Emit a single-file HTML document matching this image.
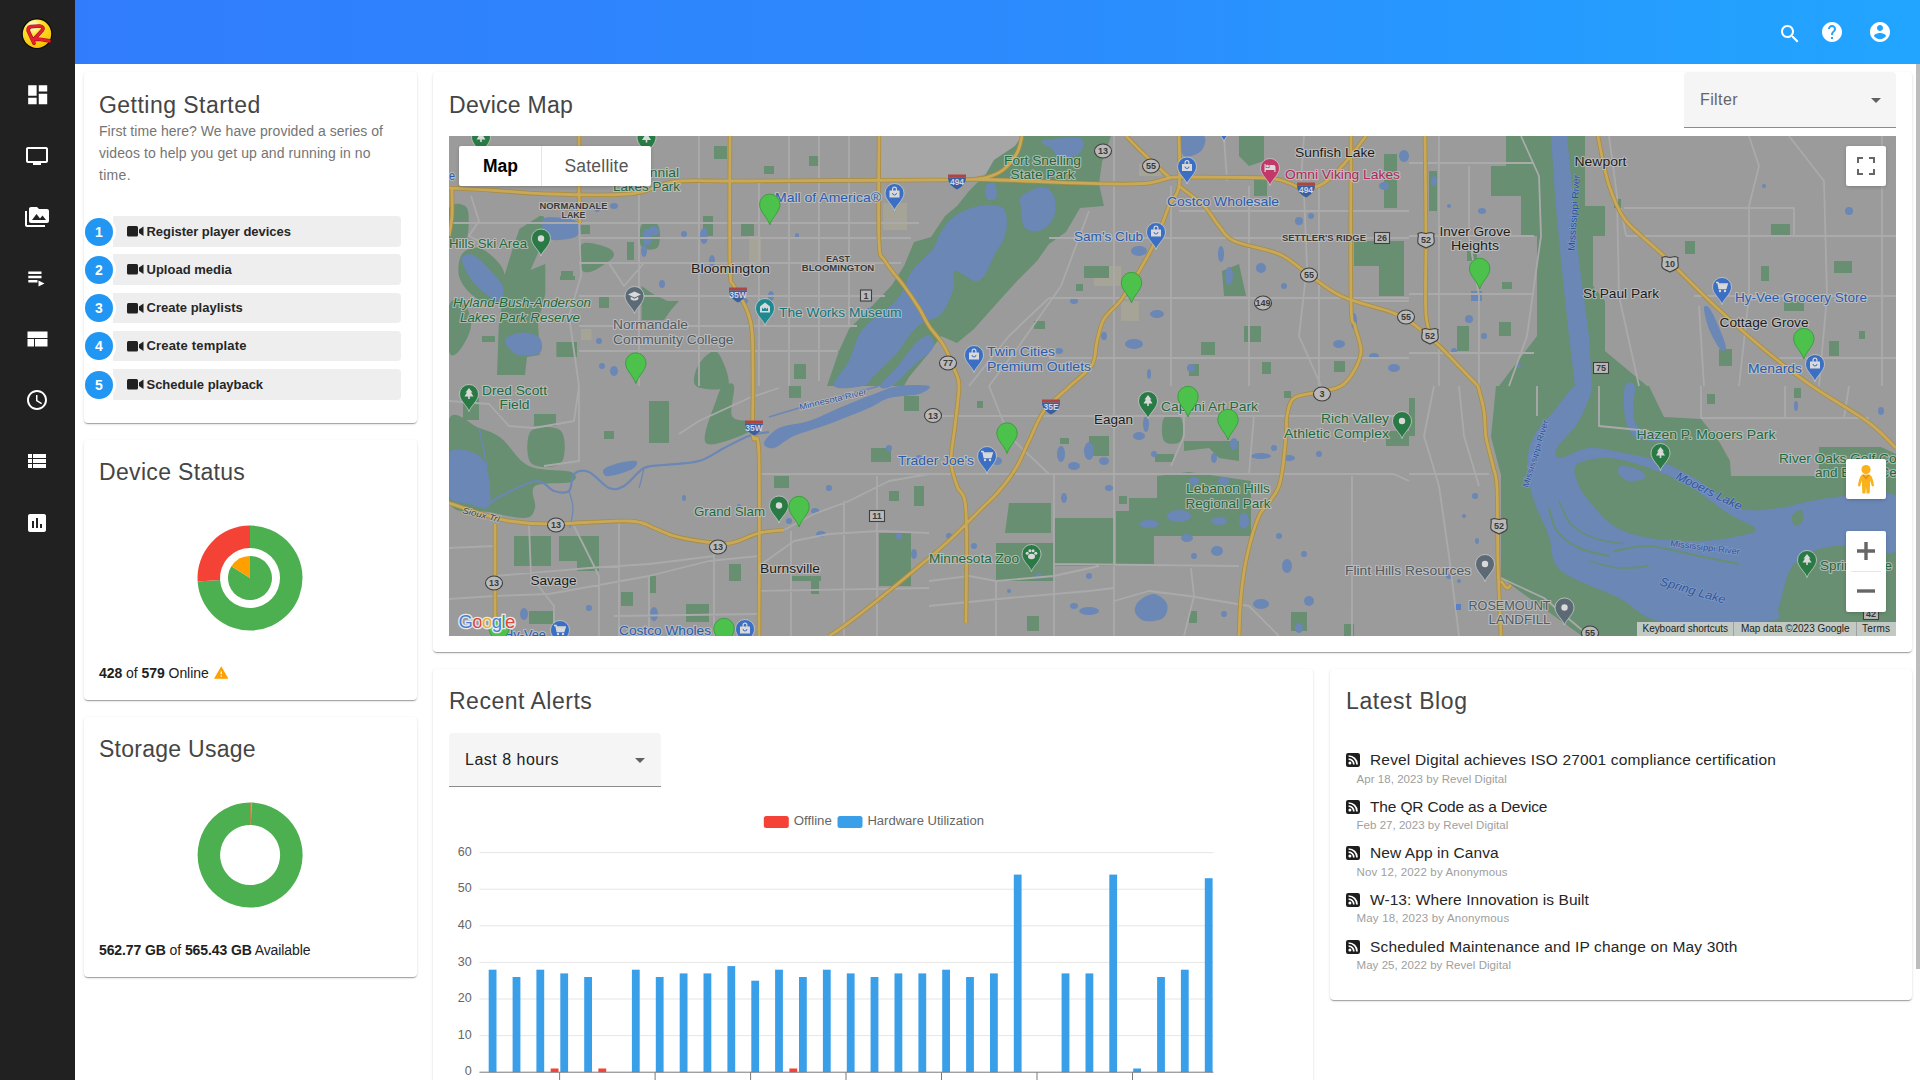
<!DOCTYPE html>
<html lang="en">
<head>
<meta charset="utf-8">
<title>Dashboard</title>
<style>
*{box-sizing:border-box;margin:0;padding:0}
html,body{width:1920px;height:1080px;overflow:hidden;background:#fff;font-family:"Liberation Sans",sans-serif;color:#212121}
.abs{position:absolute}
#side{position:absolute;left:0;top:0;width:75px;height:1080px;background:#212121}
#side svg{position:absolute;left:25px;width:24px;height:24px;fill:#fff}
#top{position:absolute;left:75px;top:0;width:1845px;height:64px;background:linear-gradient(90deg,#317cfc 0%,#2c8afd 50%,#21a5ff 100%)}
#top svg{position:absolute;fill:#fff}
.card{position:absolute;background:#fff;border-radius:4px;box-shadow:0 2px 1px -1px rgba(0,0,0,.2),0 1px 1px 0 rgba(0,0,0,.14),0 1px 3px 0 rgba(0,0,0,.12)}
.h{position:absolute;font-size:23px;font-weight:400;color:#454545;white-space:nowrap;line-height:28px}
.t{position:absolute;white-space:nowrap}
</style>
</head>
<body>
<div id="side">
  <!-- logo -->
  <svg style="left:21px;top:18px;width:32px;height:32px;overflow:visible" viewBox="0 0 32 32">
    <defs><radialGradient id="lg" cx=".36" cy=".22" r=".8"><stop offset="0" stop-color="#fffbe6"/><stop offset=".18" stop-color="#fff3a0"/><stop offset=".42" stop-color="#ffe02a"/><stop offset="1" stop-color="#f4c000"/></radialGradient></defs>
    <circle cx="16" cy="15.7" r="15.4" fill="#0c0c0c"/>
    <circle cx="16" cy="15.7" r="14.2" fill="url(#lg)"/>
    <path d="M13 25.2L7.2 12.8C6.9 10.4 7.9 8.9 10 8.6L18.8 8C21.7 8.1 22.9 10.2 21.3 12.2L13 21.3L18.6 21.3L28.2 22.9" fill="none" stroke="#a8121e" stroke-width="3.7" stroke-linecap="round" stroke-linejoin="round"/>
    <path d="M13 25.2L7.2 12.8C6.9 10.4 7.9 8.9 10 8.6L18.8 8C21.7 8.1 22.9 10.2 21.3 12.2L13 21.3L18.6 21.3L28.2 22.9" fill="none" stroke="#e6212f" stroke-width="2.5" stroke-linecap="round" stroke-linejoin="round"/>
  </svg>
  <svg style="top:81.5px;left:24.5px;width:25.4px;height:25.4px" viewBox="0 0 24 24"><path d="M3 13h8V3H3v10zm0 8h8v-6H3v6zm10 0h8V11h-8v10zm0-18v6h8V3h-8z"/></svg>
  <svg style="top:143.5px" viewBox="0 0 24 24"><path d="M21 3H3c-1.1 0-2 .9-2 2v12c0 1.1.9 2 2 2h5v2h8v-2h5c1.1 0 1.99-.9 1.99-2L23 5c0-1.1-.9-2-2-2zm0 14H3V5h18v12z"/></svg>
  <svg style="top:205px" viewBox="0 0 24 24"><path d="M2 6H0v5h.01L0 20c0 1.1.9 2 2 2h18v-2H2V6zm20-2h-8l-2-2H6c-1.1 0-1.99.9-1.99 2L4 16c0 1.1.9 2 2 2h16c1.1 0 2-.9 2-2V6c0-1.1-.9-2-2-2zM7 15l4.500-6 3.500 4.510 2.500-3.010L21 15H7z"/></svg>
  <svg style="top:267px" viewBox="0 0 24 24"><path d="M3.300 4.500h13.200v2.500H3.300zM3.300 8.800h13.200v2.500H3.300zM3.300 13h9.200v2.500H3.300zM13.500 13.500v6l6-3z"/></svg>
  <svg style="top:327px" viewBox="0 0 24 24"><path d="M2.500 4.500h20v6.500h-20zM2.500 12h6.500v7.500H2.500zM10 12h12.500v7.500H10z"/></svg>
  <svg style="top:388px" viewBox="0 0 24 24"><path d="M11.990 2C6.470 2 2 6.480 2 12s4.470 10 9.990 10C17.520 22 22 17.520 22 12S17.520 2 11.990 2zM12 20c-4.420 0-8-3.580-8-8s3.580-8 8-8 8 3.580 8 8-3.580 8-8 8zm.500-13H11v6l5.250 3.150.750-1.230-4.500-2.670z"/></svg>
  <svg style="top:449px" viewBox="0 0 24 24"><path d="M3 14h4v-4H3v4zm0 5h4v-4H3v4zM3 9h4V5H3v4zm5 5h13v-4H8v4zm0 5h13v-4H8v4zM8 5v4h13V5H8z"/></svg>
  <svg style="top:511px" viewBox="0 0 24 24"><path d="M19 3H5c-1.100 0-2 .900-2 2v14c0 1.100.900 2 2 2h14c1.100 0 2-.900 2-2V5c0-1.100-.900-2-2-2zM9 17H7v-7h2v7zm4 0h-2V7h2v10zm4 0h-2v-4h2v4z"/></svg>
</div>
<div id="top">
  <svg style="left:1703px;top:22px;width:24px;height:24px" viewBox="0 0 24 24"><path d="M15.500 14h-.790l-.280-.270C15.410 12.590 16 11.110 16 9.500 16 5.910 13.090 3 9.500 3S3 5.910 3 9.500 5.910 16 9.500 16c1.610 0 3.090-.590 4.230-1.570l.270.280v.790l5 4.990L20.490 19l-4.990-5zm-6 0C7.010 14 5 11.990 5 9.500S7.010 5 9.500 5 14 7.010 14 9.500 11.990 14 9.500 14z"/></svg>
  <svg style="left:1745px;top:20px;width:24px;height:24px" viewBox="0 0 24 24"><path d="M12 2C6.480 2 2 6.480 2 12s4.480 10 10 10 10-4.480 10-10S17.520 2 12 2zm1 17h-2v-2h2v2zm2.070-7.750l-.900.920C13.450 12.900 13 13.500 13 15h-2v-.500c0-1.100.450-2.100 1.170-2.830l1.240-1.260c.370-.360.590-.860.590-1.410 0-1.100-.900-2-2-2s-2 .900-2 2H8c0-2.210 1.790-4 4-4s4 1.790 4 4c0 .880-.360 1.680-.930 2.250z"/></svg>
  <svg style="left:1793px;top:20px;width:24px;height:24px" viewBox="0 0 24 24"><path d="M12 2C6.480 2 2 6.480 2 12s4.480 10 10 10 10-4.480 10-10S17.520 2 12 2zm0 3c1.660 0 3 1.340 3 3s-1.340 3-3 3-3-1.340-3-3 1.340-3 3-3zm0 14.200c-2.500 0-4.710-1.280-6-3.220.030-1.990 4-3.080 6-3.080 1.990 0 5.970 1.090 6 3.080-1.290 1.940-3.500 3.220-6 3.220z"/></svg>
</div>

<!-- CARDS -->
<div class="card" id="c-gs" style="left:84px;top:72px;width:333px;height:351px"></div>
<div class="card" id="c-ds" style="left:84px;top:440px;width:333px;height:260px"></div>
<div class="card" id="c-su" style="left:84px;top:717px;width:333px;height:260px"></div>
<div class="card" id="c-map" style="left:433px;top:72px;width:1479px;height:580px"></div>
<div class="card" id="c-al" style="left:433px;top:669px;width:880px;height:430px"></div>
<div class="card" id="c-bl" style="left:1330px;top:669px;width:582px;height:331px"></div>

<div class="h" id="h0" style="letter-spacing:0.47px;left:99px;top:90.5px">Getting Started</div>
<div class="h" id="h1" style="letter-spacing:0.33px;left:99px;top:457.7px">Device Status</div>
<div class="h" id="h2" style="letter-spacing:0.26px;left:99px;top:734.7px">Storage Usage</div>
<div class="h" id="h3" style="letter-spacing:0.27px;left:449px;top:90.5px">Device Map</div>
<div class="h" id="h4" style="letter-spacing:0.5px;left:449px;top:686.6px">Recent Alerts</div>
<div class="h" id="h5" style="letter-spacing:0.59px;left:1346px;top:686.6px">Latest Blog</div>

<div class="t" id="p0" style="letter-spacing:0.04px;left:99px;top:120.5px;font-size:14px;line-height:21.8px;color:#757575">First time here? We have provided a series of</div>
<div class="t" id="p1" style="letter-spacing:0.09px;left:99px;top:142.5px;font-size:14px;line-height:21.8px;color:#757575">videos to help you get up and running in no</div>
<div class="t" id="p2" style="letter-spacing:0.3px;left:99px;top:164.5px;font-size:14px;line-height:21.8px;color:#757575">time.</div>
<div class="abs" style="left:113px;top:216.00px;width:288px;height:30.5px;background:#eeeeee;border-radius:0 4px 4px 0"></div>
<div class="abs" style="left:82.5px;top:215.00px;width:33px;height:33px;border-radius:50%;background:#fff"></div>
<div class="abs" style="left:85px;top:217.50px;width:28px;height:28px;border-radius:50%;background:#2196f3;color:#fff;font-weight:700;font-size:14px;line-height:28px;text-align:center">1</div>
<svg class="abs" style="left:127px;top:226.00px;width:17px;height:11px" viewBox="0 0 17 11"><rect x="0" y="0" width="11" height="10.5" rx="1.5" fill="#212121"/><path d="M12 3.5L16.5 .5V10L12 7z" fill="#212121"/></svg>
<div class="t" id="s0" style="letter-spacing:-0.04px;left:146.5px;top:222.50px;font-size:13px;line-height:17px;font-weight:700;color:#262626">Register player devices</div>
<div class="abs" style="left:113px;top:254.25px;width:288px;height:30.5px;background:#eeeeee;border-radius:0 4px 4px 0"></div>
<div class="abs" style="left:82.5px;top:253.25px;width:33px;height:33px;border-radius:50%;background:#fff"></div>
<div class="abs" style="left:85px;top:255.75px;width:28px;height:28px;border-radius:50%;background:#2196f3;color:#fff;font-weight:700;font-size:14px;line-height:28px;text-align:center">2</div>
<svg class="abs" style="left:127px;top:264.25px;width:17px;height:11px" viewBox="0 0 17 11"><rect x="0" y="0" width="11" height="10.5" rx="1.5" fill="#212121"/><path d="M12 3.5L16.5 .5V10L12 7z" fill="#212121"/></svg>
<div class="t" id="s1" style="letter-spacing:0.01px;left:146.5px;top:260.75px;font-size:13px;line-height:17px;font-weight:700;color:#262626">Upload media</div>
<div class="abs" style="left:113px;top:292.50px;width:288px;height:30.5px;background:#eeeeee;border-radius:0 4px 4px 0"></div>
<div class="abs" style="left:82.5px;top:291.50px;width:33px;height:33px;border-radius:50%;background:#fff"></div>
<div class="abs" style="left:85px;top:294.00px;width:28px;height:28px;border-radius:50%;background:#2196f3;color:#fff;font-weight:700;font-size:14px;line-height:28px;text-align:center">3</div>
<svg class="abs" style="left:127px;top:302.50px;width:17px;height:11px" viewBox="0 0 17 11"><rect x="0" y="0" width="11" height="10.5" rx="1.5" fill="#212121"/><path d="M12 3.5L16.5 .5V10L12 7z" fill="#212121"/></svg>
<div class="t" id="s2" style="letter-spacing:0.01px;left:146.5px;top:299.00px;font-size:13px;line-height:17px;font-weight:700;color:#262626">Create playlists</div>
<div class="abs" style="left:113px;top:330.75px;width:288px;height:30.5px;background:#eeeeee;border-radius:0 4px 4px 0"></div>
<div class="abs" style="left:82.5px;top:329.75px;width:33px;height:33px;border-radius:50%;background:#fff"></div>
<div class="abs" style="left:85px;top:332.25px;width:28px;height:28px;border-radius:50%;background:#2196f3;color:#fff;font-weight:700;font-size:14px;line-height:28px;text-align:center">4</div>
<svg class="abs" style="left:127px;top:340.75px;width:17px;height:11px" viewBox="0 0 17 11"><rect x="0" y="0" width="11" height="10.5" rx="1.5" fill="#212121"/><path d="M12 3.5L16.5 .5V10L12 7z" fill="#212121"/></svg>
<div class="t" id="s3" style="letter-spacing:0.17px;left:146.5px;top:337.25px;font-size:13px;line-height:17px;font-weight:700;color:#262626">Create template</div>
<div class="abs" style="left:113px;top:369.00px;width:288px;height:30.5px;background:#eeeeee;border-radius:0 4px 4px 0"></div>
<div class="abs" style="left:82.5px;top:368.00px;width:33px;height:33px;border-radius:50%;background:#fff"></div>
<div class="abs" style="left:85px;top:370.50px;width:28px;height:28px;border-radius:50%;background:#2196f3;color:#fff;font-weight:700;font-size:14px;line-height:28px;text-align:center">5</div>
<svg class="abs" style="left:127px;top:379.00px;width:17px;height:11px" viewBox="0 0 17 11"><rect x="0" y="0" width="11" height="10.5" rx="1.5" fill="#212121"/><path d="M12 3.5L16.5 .5V10L12 7z" fill="#212121"/></svg>
<div class="t" id="s4" style="letter-spacing:-0.03px;left:146.5px;top:375.50px;font-size:13px;line-height:17px;font-weight:700;color:#262626">Schedule playback</div>
<svg class="abs" style="left:190px;top:518px;width:120px;height:120px" viewBox="0 0 120 120"><path d="M60.00 7.50A52.5 52.5 0 1 1 7.62 63.56L30.07 62.03A30 30 0 1 0 60.00 30.00Z" fill="#4caf50"/><path d="M7.62 63.56A52.5 52.5 0 0 1 60.00 7.50L60.00 30.00A30 30 0 0 0 30.07 62.03Z" fill="#f44336"/><path d="M60 60L60.00 38.00A22 22 0 1 1 41.34 48.34Z" fill="#4caf50"/><path d="M60 60L41.34 48.34A22 22 0 0 1 60.00 38.00Z" fill="#ffa000"/></svg>
<div class="t" id="on" style="letter-spacing:-0.05px;left:99px;top:664px;font-size:14px;line-height:18px;color:#212121"><b>428</b> of <b>579</b> Online</div>
<svg class="abs" style="left:213.5px;top:666px;width:14.5px;height:13px" viewBox="0 0 22 19"><path d="M0 19h22L11 0 0 19zm12-3h-2v-2h2v2zm0-4h-2V8h2v4z" fill="#ffa000"/></svg>
<svg class="abs" style="left:190px;top:795px;width:120px;height:120px" viewBox="0 0 120 120"><path d="M61.56 7.52A52.5 52.5 0 1 1 60.00 7.50L60.00 30.00A30 30 0 1 0 60.89 30.01Z" fill="#4caf50"/><path d="M60.00 7.50A52.5 52.5 0 0 1 61.56 7.52L60.89 30.01A30 30 0 0 0 60.00 30.00Z" fill="#b5894a"/></svg>
<div class="t" id="av" style="letter-spacing:-0.1px;left:99px;top:941px;font-size:14px;line-height:18px;color:#212121"><b>562.77 GB</b> of <b>565.43 GB</b> Available</div>

<svg class="abs" style="left:449px;top:136px;width:1447px;height:500px" viewBox="0 0 1447 500" font-family="Liberation Sans, sans-serif"><rect x="0" y="0" width="1447" height="500" fill="#9b9b9c"/><path d="M432 0L573 0L566 10L545 24L537 38L520 43L432 43Z" fill="#a6a6a7"/><rect x="132" y="193" width="10.6" height="11" fill="#a6a397"/><rect x="434" y="67" width="24" height="27" fill="#a6a397"/><rect x="645" y="130" width="27" height="20" fill="#a6a397"/><rect x="672" y="165" width="18" height="20" fill="#a6a397"/><rect x="300" y="100" width="12" height="30" fill="#a6a397"/><rect x="690" y="28" width="22" height="12" fill="#a6a397"/><path d="M90.7 80L70.4 93L63 115L55.6 139L55.6 158L50 184L48 239L76 239L78 221L90.7 219L89 187L96.3 158L96.3 128L81.5 134L89 117L100 98.4L94.4 80Z" fill="#688f71"/><path d="M0 72C3 65.7 15 67 18 72C21 77 19.7 96.7 18 102C16.3 107.3 11 102.7 8 104C5 105.3 1.3 115.3 0 110C-1.3 104.7 -3 78.3 0 72Z" fill="#688f71"/><path d="M13 118C16.3 113.3 24.2 110.8 30 112C35.8 113.2 43.7 120.3 48 125C52.3 129.7 54.8 133.2 56 140C57.2 146.8 57.7 161.3 55 166C52.3 170.7 45.5 169.3 40 168C34.5 166.7 27 162.7 22 158C17 153.3 11.5 146.7 10 140C8.5 133.3 9.7 122.7 13 118Z" fill="#688f71"/><path d="M0 170C2.3 161.7 10.3 161.7 14 165C17.7 168.3 22.7 181.7 22 190C21.3 198.3 13.7 210.8 10 215C6.3 219.2 1.7 222.5 0 215C-1.7 207.5 -2.3 178.3 0 170Z" fill="#688f71"/><path d="M133 108C137.2 104.5 151.7 109.2 157 111C162.3 112.8 165.2 116.2 165 119C164.8 121.8 160 125.2 156 128C152 130.8 145 135.3 141 136C137 136.7 133.3 136.7 132 132C130.7 127.3 128.8 111.5 133 108Z" fill="#688f71"/><path d="M132 89L141 89L141 98L132 98Z" fill="#688f71"/><path d="M192.6 89C195.3 85.3 206.3 85.3 209 89C211.7 92.7 211.7 107.3 209 111C206.3 114.7 195.3 114.7 192.6 111C189.9 107.3 189.9 92.7 192.6 89Z" fill="#688f71"/><path d="M178 106L185 106L185 124L178 124Z" fill="#688f71"/><path d="M192.6 150L204 158L218.5 165L230 165L222 174L215 184L192.6 184Z" fill="#688f71"/><path d="M107.4 206L128 206L128 221L107.4 221Z" fill="#688f71"/><path d="M33 200L46 200L46 206L33 206Z" fill="#688f71"/><path d="M111 140L126 140L126 144L111 144Z" fill="#688f71"/><path d="M250 228C253.5 222.3 263.2 212.3 268 216C272.8 219.7 282.5 244.3 279 250C275.5 255.7 251.8 253.7 247 250C242.2 246.3 246.5 233.7 250 228Z" fill="#688f71"/><path d="M265 10L278 10L278 23L265 23Z" fill="#688f71"/><path d="M254 80L264 80L264 100L254 100Z" fill="#688f71"/><path d="M292 88L305 88L305 100L292 100Z" fill="#688f71"/><path d="M345 228L357 228L357 243L345 243Z" fill="#688f71"/><path d="M360 20L370 20L370 30L360 30Z" fill="#688f71"/><path d="M112 135L124 135L124 142L112 142Z" fill="#688f71"/><path d="M315 30L325 30L325 38L315 38Z" fill="#688f71"/><path d="M150 160L160 160L160 172L150 172Z" fill="#688f71"/><path d="M18 20L40 20L40 40L18 40Z" fill="#688f71"/><path d="M378 250L390 215L400 193L424 169L443 149L455 130L465 106L482 101L496 80L508 70L520 55L537 38L545 24L566 10L573 0L662 0L653 26L650 48L655 70L631 72L617 96L600 108L588 125L569 144L549 166L525 193L508 207L492 200L480 217L460 241L455 250Z" fill="#688f71"/><path d="M773 135L790 128L797 160L775 160Z" fill="#688f71"/><path d="M905 105L955 105L955 160L930 160L930 130L905 130Z" fill="#688f71"/><path d="M790 0L815 0L815 25L800 30L790 20Z" fill="#688f71"/><path d="M935 18L948 18L948 72L935 72Z" fill="#688f71"/><path d="M805 40L818 40L818 60L805 60Z" fill="#688f71"/><path d="M795 190L812 190L812 206L795 206Z" fill="#688f71"/><path d="M635 130L660 130L660 142L635 142Z" fill="#688f71"/><path d="M627 148L634 148L634 155L627 155Z" fill="#688f71"/><path d="M585 185L596 185L596 193L585 193Z" fill="#688f71"/><path d="M752 206L766 206L766 219L752 219Z" fill="#688f71"/><path d="M813 226L822 226L822 238L813 238Z" fill="#688f71"/><path d="M885 225L896 225L896 236L885 236Z" fill="#688f71"/><path d="M740 228L750 228L750 240L740 240Z" fill="#688f71"/><path d="M1057 0L1136 0L1136 70L1156 70L1156 100L1144 100L1144 150L1156 165L1156 215L1198 250L1050 250L1088 200L1088 100L1072 100L1072 60L1042 60L1042 30L1057 30Z" fill="#688f71"/><path d="M1236 105L1246 105L1246 118L1236 118Z" fill="#688f71"/><path d="M1322 88L1341 88L1341 100L1322 100Z" fill="#688f71"/><path d="M1385 125L1403 125L1403 137L1385 137Z" fill="#688f71"/><path d="M1270 213L1283 213L1283 230L1270 230Z" fill="#688f71"/><path d="M1050 186L1062 186L1062 200L1050 200Z" fill="#688f71"/><path d="M980 35L988 35L988 75L980 75Z" fill="#688f71"/><path d="M1018 115L1028 115L1028 125L1018 125Z" fill="#688f71"/><path d="M1312 130L1320 130L1320 145L1312 145Z" fill="#688f71"/><path d="M1335 165L1355 165L1355 175L1335 175Z" fill="#688f71"/><path d="M1380 205L1390 205L1390 220L1380 220Z" fill="#688f71"/><path d="M1165 63L1172 63L1172 72L1165 72Z" fill="#688f71"/><path d="M1008 190L1020 190L1020 215L1008 215Z" fill="#688f71"/><path d="M1053 146L1063 146L1063 153L1053 153Z" fill="#688f71"/><path d="M1410 195L1416 195L1416 203L1410 203Z" fill="#688f71"/><path d="M0 283C5 270.7 21.3 288.8 30 292C38.7 295.2 43.7 295.7 52 302C60.3 308.3 68.3 324.3 80 330C91.7 335.7 115 333.3 122 336C129 338.7 128 343.7 122 346C116 348.3 92 345.7 86 350C80 354.3 87.7 366.7 86 372C84.3 377.3 83.7 381.3 76 382C68.3 382.7 52.7 378.7 40 376C27.3 373.3 6.7 381.5 0 366C-6.7 350.5 -5 295.3 0 283Z" fill="#688f71"/><path d="M82 295C87 289.7 107 289.7 112 295C117 300.3 117 321.7 112 327C107 332.3 87 332.3 82 327C77 321.7 77 300.3 82 295Z" fill="#688f71"/><path d="M200 265L220 265L220 307L200 307Z" fill="#688f71"/><path d="M257 307C251.7 301.3 265 271.5 268 262C271 252.5 272.2 252 275 250C277.8 248 283.7 245 285 250C286.3 255 280.5 274 283 280C285.5 286 297.2 283.3 300 286C302.8 288.7 307.2 292.5 300 296C292.8 299.5 262.3 312.7 257 307Z" fill="#688f71"/><path d="M65 400L102 400L102 430L65 430Z" fill="#688f71"/><path d="M110 400L150 400L150 435L128 435L128 425L110 425Z" fill="#688f71"/><path d="M430 397L462 397L462 450L430 450Z" fill="#688f71"/><path d="M14 262L30 262L30 284L14 284Z" fill="#688f71"/><path d="M85 278L107 278L107 290L85 290Z" fill="#688f71"/><path d="M155 295L165 295L165 303L155 303Z" fill="#688f71"/><path d="M237 468L260 468L260 486L237 486Z" fill="#688f71"/><path d="M172 456L184 456L184 470L172 470Z" fill="#688f71"/><path d="M325 340L340 340L340 352L325 352Z" fill="#688f71"/><path d="M343 440L372 440L372 445L343 445Z" fill="#688f71"/><path d="M362 445L370 445L370 458L362 458Z" fill="#688f71"/><path d="M422 312L442 312L442 326L422 326Z" fill="#688f71"/><path d="M340 250L352 250L352 262L340 262Z" fill="#688f71"/><path d="M80 475L104 475L104 488L80 488Z" fill="#688f71"/><path d="M280 428L292 428L292 445L280 445Z" fill="#688f71"/><path d="M200 440L207 440L207 457L200 457Z" fill="#688f71"/><path d="M455 260L470 260L470 275L455 275Z" fill="#688f71"/><path d="M440 355L450 355L450 365L440 365Z" fill="#688f71"/><path d="M465 350L475 350L475 370L465 370Z" fill="#688f71"/><path d="M667 375L680 375L680 362L708 362L708 340L740 336L802 345L802 400L667 400Z" fill="#688f71"/><path d="M605 382L665 382L665 430L605 430Z" fill="#688f71"/><path d="M560 367L602 367L602 397L556 397Z" fill="#688f71"/><path d="M547 407L605 407L605 445L547 445Z" fill="#688f71"/><path d="M667 400L705 400L705 429L667 429Z" fill="#688f71"/><path d="M715 282C717.8 278.2 729.2 278.2 732 282C734.8 285.8 734.8 301.2 732 305C729.2 308.8 717.8 308.8 715 305C712.2 301.2 712.2 285.8 715 282Z" fill="#688f71"/><path d="M735 305L790 305L790 325L770 322L760 312L735 315Z" fill="#688f71"/><path d="M937 295L960 295L960 310L937 310Z" fill="#688f71"/><path d="M640 300L660 300L660 320L640 320Z" fill="#688f71"/><path d="M706 318L725 318L725 326L706 326Z" fill="#688f71"/><path d="M895 488L905 488L905 500L895 500Z" fill="#688f71"/><path d="M740 475L748 475L748 487L740 487Z" fill="#688f71"/><path d="M842 476L858 476L858 495L842 495Z" fill="#688f71"/><path d="M578 480L590 480L590 495L578 495Z" fill="#688f71"/><path d="M528 265L534 265L534 272L528 272Z" fill="#688f71"/><path d="M611 302L620 302L620 308L611 308Z" fill="#688f71"/><path d="M670 360L678 360L678 368L670 368Z" fill="#688f71"/><path d="M835 255L842 255L842 262L835 262Z" fill="#688f71"/><path d="M1047 250L1200 250L1215 281L1252 283L1271 307L1281 325L1282 340L1370 340L1370 311L1432 311L1447 318L1447 500L1133 500L1062 449L1052 441L1052 339L1042 301Z" fill="#688f71"/><path d="M960 262L966 262L966 300L960 300Z" fill="#688f71"/><path d="M1258 258L1266 258L1266 268L1258 268Z" fill="#688f71"/><path d="M1345 252L1352 252L1352 262L1345 262Z" fill="#688f71"/><path d="M13 122.5C13.6 118.8 19.7 117.4 24 119C28.3 120.6 34 126.8 39 132C44 137.2 51.5 144.5 53.7 150C55.9 155.5 54.8 163.7 52 165C49.2 166.3 42.3 162 37 158C31.7 154 24.4 146.9 20.4 141C16.4 135.1 12.4 126.2 13 122.5Z" fill="#6a87b6"/><path d="M57.4 202C59.9 199.5 68.5 196.6 74 196.6C79.5 196.6 87.9 198.6 90.7 202C93.5 205.4 94.1 214.2 90.7 217C87.3 219.8 75.6 219.9 70.4 219C65.2 218.1 61.5 214.2 59.3 211.4C57.1 208.6 54.9 204.5 57.4 202Z" fill="#6a87b6"/><path d="M95.4 82C100.8 80.2 122.6 82.5 128 85.5C133.4 88.5 132 96.9 128 100C124 103.1 109.4 104.6 104 104C98.6 103.4 96.8 100.3 95.4 96.6C94 92.9 90 83.8 95.4 82Z" fill="#6a87b6"/><path d="M194.5 95C195.5 92.7 199.8 92 201 94C202.2 96 203 104.7 202 107C201 109.3 196.2 110 195 108C193.8 106 193.5 97.3 194.5 95Z" fill="#6a87b6"/><path d="M732 0C735.3 -3.3 751.7 -2.5 755 0C758.3 2.5 755.3 11.7 752 15C748.7 18.3 738.3 22.5 735 20C731.7 17.5 728.7 3.3 732 0Z" fill="#6a87b6"/><path d="M385 250C382.7 245.8 395.2 234.5 400 225C404.8 215.5 406 203.2 414 193C422 182.8 439.8 173.7 448 164C456.2 154.3 457 143.5 463 135C469 126.5 479.2 119.5 484 113C488.8 106.5 488.3 101.5 492 96C495.7 90.5 499.7 84.3 506 80C512.3 75.7 522 71.3 530 70C538 68.7 549.5 67.7 554 72C558.5 76.3 558.5 88 557 96C555.5 104 548.7 112.7 545 120C541.3 127.3 538.3 135.8 535 140C531.7 144.2 529.8 145.8 525 145C520.2 144.2 509.5 133.5 506 135C502.5 136.5 506.3 146.8 504 154C501.7 161.2 497.3 172.3 492 178C486.7 183.7 477.3 184.3 472 188C466.7 191.7 464 195.2 460 200C456 204.8 454 210.2 448 217C442 223.8 429.7 235.5 424 241C418.3 246.5 420.5 248.5 414 250C407.5 251.5 387.3 254.2 385 250Z" fill="#6a87b6"/><path d="M573 60C576.5 56.5 587.7 51 593 51C598.3 51 603 55.2 605 60C607 64.8 607 74.3 605 80C603 85.7 597.8 92 593 94C588.2 96 579.5 95.7 576 92C572.5 88.3 572.5 77.3 572 72C571.5 66.7 569.5 63.5 573 60Z" fill="#6a87b6"/><path d="M593 5C597.8 3.3 624.7 0 631 2C637.3 4 634.2 13.7 631 17C627.8 20.3 616.8 22.8 612 22C607.2 21.2 605.2 14.8 602 12C598.8 9.2 588.2 6.7 593 5Z" fill="#6a87b6"/><path d="M537 50C538.3 47.5 544.3 46 546 48C547.7 50 548.3 59.5 547 62C545.7 64.5 539.7 65 538 63C536.3 61 535.7 52.5 537 50Z" fill="#6a87b6"/><path d="M480 200C482.8 200.8 486.8 206.8 484 212C481.2 217.2 469.8 224.7 463 231C456.2 237.3 448.3 246.8 443 250C437.7 253.2 430.2 253.2 431 250C431.8 246.8 442 238.2 448 231C454 223.8 461.7 212.2 467 207C472.3 201.8 477.2 199.2 480 200Z" fill="#6a87b6"/><path d="M1102 0L1118 0L1124 60L1130 125L1140 200L1143 250L1126 250L1120 200L1112 125L1106 60Z" fill="#6a87b6"/><path d="M0 317C4.2 309.8 18.7 314.5 25 317C31.3 319.5 35.5 323.2 38 332C40.5 340.8 43 364 40 370C37 376 26.7 369.7 20 368C13.3 366.3 3.3 368.5 0 360C-3.3 351.5 -4.2 324.2 0 317Z" fill="#6a87b6"/><path d="M315 307C315.8 303.7 322.5 295.7 330 292C337.5 288.3 350 288.3 360 285C370 281.7 379.2 276.5 390 272C400.8 267.5 415 261.7 425 258C435 254.3 440.8 251.3 450 250C459.2 248.7 476.7 248.7 480 250C483.3 251.3 476.7 256 470 258C463.3 260 448.3 259.7 440 262C431.7 264.3 430 267.7 420 272C410 276.3 392.5 283.3 380 288C367.5 292.7 354.2 296 345 300C335.8 304 330 310.8 325 312C320 313.2 314.2 310.3 315 307Z" fill="#6a87b6"/><path d="M155 333C157.2 330.8 164.7 328.3 170 327C175.3 325.7 184.5 324.2 187 325C189.5 325.8 187.8 329.8 185 332C182.2 334.2 174.7 336.7 170 338C165.3 339.3 159.5 340.8 157 340C154.5 339.2 152.8 335.2 155 333Z" fill="#6a87b6"/><path d="M1126 250C1132.3 245.8 1142.3 244.2 1143 250C1143.7 255.8 1135.8 274.7 1130 285C1124.2 295.3 1111 305.8 1108 312C1105 318.2 1106.7 322 1112 322C1117.3 322 1128.7 312.7 1140 312C1151.3 311.3 1167.5 315.5 1180 318C1192.5 320.5 1203.3 322.5 1215 327C1226.7 331.5 1237.5 337.5 1250 345C1262.5 352.5 1276.7 367.5 1290 372C1303.3 376.5 1315 373.7 1330 372C1345 370.3 1360.5 364 1380 362C1399.5 360 1435.8 351.2 1447 360C1458.2 368.8 1457.3 406.7 1447 415C1436.7 423.3 1402 407.8 1385 410C1368 412.2 1354.2 418 1345 428C1335.8 438 1334.2 460.5 1330 470C1325.8 479.5 1339.2 482.3 1320 485C1300.8 487.7 1240 489.8 1215 486C1190 482.2 1185.8 469.7 1170 462C1154.2 454.3 1130.8 446.2 1120 440C1109.2 433.8 1108.3 431.7 1105 425C1101.7 418.3 1103.3 410 1100 400C1096.7 390 1088.7 376.7 1085 365C1081.3 353.3 1078 340.8 1078 330C1078 319.2 1080.5 309.2 1085 300C1089.5 290.8 1098.2 283.3 1105 275C1111.8 266.7 1119.7 254.2 1126 250Z" fill="#6a87b6"/><path d="M1176 250C1177.7 245 1184.7 245.8 1186 250C1187.3 254.2 1183.3 268 1184 275C1184.7 282 1184.8 287.8 1190 292C1195.2 296.2 1211.3 297.7 1215 300C1218.7 302.3 1217 306 1212 306C1207 306 1191 304.3 1185 300C1179 295.7 1177.5 288.3 1176 280C1174.5 271.7 1174.3 255 1176 250Z" fill="#6a87b6"/><path d="M690 465C693.2 462 700.3 457.5 705 458C709.7 458.5 716.5 464 718 468C719.5 472 717.7 479.2 714 482C710.3 484.8 700.7 486 696 485C691.3 484 687 479.3 686 476C685 472.7 686.8 468 690 465Z" fill="#6a87b6"/><path d="M1255 172C1255.2 168.7 1258.3 169.3 1261 173C1263.7 176.7 1268.3 187.5 1271 194C1273.7 200.5 1277 208.8 1277 212C1277 215.2 1273.8 216.2 1271 213C1268.2 209.8 1262.7 199.8 1260 193C1257.3 186.2 1254.8 175.3 1255 172Z" fill="#6a87b6"/><path d="M1022 155L1033 155L1033 165L1022 165Z" fill="#6a87b6"/><path d="M40 368C42 366.7 44.2 363.8 52 360C59.8 356.2 78.2 345.8 87 345C95.8 344.2 99.5 353.3 105 355C110.5 356.7 116.7 357.8 120 355C123.3 352.2 121.7 341.2 125 338C128.3 334.8 134.2 333.7 140 336C145.8 338.3 154.2 349.7 160 352C165.8 354.3 169.2 353.3 175 350C180.8 346.7 188.3 335.5 195 332C201.7 328.5 205.8 330.2 215 329C224.2 327.8 240 327.8 250 325C260 322.2 266.7 316.2 275 312C283.3 307.8 292.5 302.7 300 300C307.5 297.3 316.7 296.7 320 296" fill="none" stroke="#6a87b6" stroke-width="2.2"/><path d="M320 281C325 279.5 339.2 275.2 350 272C360.8 268.8 374.7 264.8 385 262C395.3 259.2 404.5 257 412 255C419.5 253 427 250.8 430 250" fill="none" stroke="#6a87b6" stroke-width="1.5"/><path d="M30 292C30.7 295 32.7 303.3 34 310C35.3 316.7 37.3 328.3 38 332" fill="none" stroke="#6a87b6" stroke-width="1.5"/><path d="M120 355C120.7 357.8 123.8 365.8 124 372C124.2 378.2 121.5 388.7 121 392" fill="none" stroke="#6a87b6" stroke-width="1.2"/><path d="M195 332C194.5 334.2 192.8 341.7 192 345C191.2 348.3 190.3 350.8 190 352" fill="none" stroke="#6a87b6" stroke-width="1.2"/><path d="M1128 328C1133.3 324.2 1148 321.3 1160 322C1172 322.7 1186.7 327.3 1200 332C1213.3 336.7 1226.7 342.3 1240 350C1253.3 357.7 1269 371 1280 378C1291 385 1303.5 388.5 1306 392C1308.5 395.5 1304.3 396.8 1295 399C1285.7 401.2 1265.8 404.5 1250 405C1234.2 405.5 1214.2 404.5 1200 402C1185.8 399.5 1175 396.2 1165 390C1155 383.8 1146.2 372.5 1140 365C1133.8 357.5 1130 351.2 1128 345C1126 338.8 1122.7 331.8 1128 328Z" fill="#688f71"/><path d="M1172 330C1175.3 329.3 1186 332 1190 334C1194 336 1197.7 340.2 1196 342C1194.3 343.8 1184.3 345.7 1180 345C1175.7 344.3 1171.3 340.5 1170 338C1168.7 335.5 1168.7 330.7 1172 330Z" fill="#6a87b6"/><path d="M1100 372C1101.3 375.8 1103 388.3 1108 395C1113 401.7 1121.3 407.8 1130 412C1138.7 416.2 1155 418.7 1160 420" fill="none" stroke="#688f71" stroke-width="2"/><path d="M1110 365C1112 368.8 1116.2 381.8 1122 388C1127.8 394.2 1136.2 398.7 1145 402C1153.8 405.3 1170 407 1175 408" fill="none" stroke="#688f71" stroke-width="1.6"/><path d="M1165 415C1170.8 414.2 1187.5 409.5 1200 410C1212.5 410.5 1225 415 1240 418C1255 421 1281.7 426.3 1290 428" fill="none" stroke="#688f71" stroke-width="2"/><path d="M1140 425C1145 426.2 1160 431.2 1170 432C1180 432.8 1195 430.3 1200 430" fill="none" stroke="#688f71" stroke-width="1.6"/><path d="M1343 380C1344 377.3 1350.2 373.3 1352 374C1353.8 374.7 1355 381.3 1354 384C1353 386.7 1347.8 390.7 1346 390C1344.2 389.3 1342 382.7 1343 380Z" fill="#688f71"/><ellipse cx="255" cy="100" rx="4" ry="8" fill="#6a87b6"/><ellipse cx="263" cy="125" rx="3" ry="6" fill="#6a87b6"/><ellipse cx="205" cy="95" rx="5" ry="5" fill="#6a87b6"/><ellipse cx="195" cy="115" rx="3" ry="6" fill="#6a87b6"/><ellipse cx="148" cy="72" rx="3" ry="4" fill="#6a87b6"/><ellipse cx="165" cy="70" rx="4" ry="3" fill="#6a87b6"/><ellipse cx="235" cy="98" rx="3" ry="3" fill="#6a87b6"/><ellipse cx="213" cy="148" rx="3" ry="4" fill="#6a87b6"/><ellipse cx="295" cy="165" rx="4" ry="3" fill="#6a87b6"/><ellipse cx="322" cy="160" rx="3" ry="5" fill="#6a87b6"/><ellipse cx="150" cy="205" rx="3" ry="3" fill="#6a87b6"/><ellipse cx="165" cy="235" rx="4" ry="5" fill="#6a87b6"/><ellipse cx="153" cy="230" rx="3" ry="3" fill="#6a87b6"/><ellipse cx="420" cy="175" rx="3" ry="3" fill="#6a87b6"/><ellipse cx="348" cy="100" rx="2" ry="3" fill="#6a87b6"/><ellipse cx="690" cy="115" rx="8" ry="5" fill="#6a87b6"/><ellipse cx="708" cy="178" rx="7" ry="4" fill="#6a87b6"/><ellipse cx="685" cy="208" rx="9" ry="5" fill="#6a87b6"/><ellipse cx="772" cy="118" rx="3" ry="8" fill="#6a87b6"/><ellipse cx="780" cy="140" rx="4" ry="9" fill="#6a87b6"/><ellipse cx="812" cy="132" rx="5" ry="5" fill="#6a87b6"/><ellipse cx="850" cy="85" rx="4" ry="4" fill="#6a87b6"/><ellipse cx="862" cy="80" rx="3" ry="3" fill="#6a87b6"/><ellipse cx="625" cy="165" rx="4" ry="3" fill="#6a87b6"/><ellipse cx="610" cy="215" rx="4" ry="3" fill="#6a87b6"/><ellipse cx="655" cy="200" rx="3" ry="4" fill="#6a87b6"/><ellipse cx="742" cy="232" rx="4" ry="4" fill="#6a87b6"/><ellipse cx="700" cy="238" rx="2" ry="5" fill="#6a87b6"/><ellipse cx="835" cy="150" rx="3" ry="3" fill="#6a87b6"/><ellipse cx="890" cy="208" rx="6" ry="4" fill="#6a87b6"/><ellipse cx="925" cy="220" rx="5" ry="3" fill="#6a87b6"/><ellipse cx="945" cy="232" rx="6" ry="4" fill="#6a87b6"/><ellipse cx="905" cy="185" rx="3" ry="8" fill="#6a87b6"/><ellipse cx="935" cy="50" rx="5" ry="4" fill="#6a87b6"/><ellipse cx="955" cy="20" rx="5" ry="6" fill="#6a87b6"/><ellipse cx="1033" cy="75" rx="4" ry="3" fill="#6a87b6"/><ellipse cx="985" cy="45" rx="3" ry="5" fill="#6a87b6"/><ellipse cx="1000" cy="70" rx="2" ry="2" fill="#6a87b6"/><ellipse cx="1020" cy="183" rx="4" ry="4" fill="#6a87b6"/><ellipse cx="1035" cy="200" rx="3" ry="3" fill="#6a87b6"/><ellipse cx="1005" cy="215" rx="3" ry="3" fill="#6a87b6"/><ellipse cx="1070" cy="230" rx="2" ry="2" fill="#6a87b6"/><ellipse cx="1400" cy="75" rx="4" ry="4" fill="#6a87b6"/><ellipse cx="1315" cy="50" rx="2" ry="2" fill="#6a87b6"/><ellipse cx="548" cy="325" rx="5" ry="4" fill="#6a87b6"/><ellipse cx="612" cy="318" rx="4" ry="8" fill="#6a87b6"/><ellipse cx="625" cy="330" rx="6" ry="4" fill="#6a87b6"/><ellipse cx="640" cy="315" rx="5" ry="9" fill="#6a87b6"/><ellipse cx="655" cy="325" rx="5" ry="4" fill="#6a87b6"/><ellipse cx="690" cy="300" rx="6" ry="4" fill="#6a87b6"/><ellipse cx="697" cy="288" rx="3" ry="8" fill="#6a87b6"/><ellipse cx="705" cy="318" rx="3" ry="3" fill="#6a87b6"/><ellipse cx="765" cy="322" rx="3" ry="5" fill="#6a87b6"/><ellipse cx="785" cy="308" rx="4" ry="6" fill="#6a87b6"/><ellipse cx="812" cy="320" rx="10" ry="3" fill="#6a87b6"/><ellipse cx="840" cy="322" rx="6" ry="3" fill="#6a87b6"/><ellipse cx="825" cy="312" rx="3" ry="3" fill="#6a87b6"/><ellipse cx="870" cy="318" rx="3" ry="3" fill="#6a87b6"/><ellipse cx="745" cy="345" rx="5" ry="4" fill="#6a87b6"/><ellipse cx="775" cy="345" rx="6" ry="4" fill="#6a87b6"/><ellipse cx="730" cy="380" rx="12" ry="6" fill="#6a87b6"/><ellipse cx="700" cy="388" rx="10" ry="4" fill="#6a87b6"/><ellipse cx="770" cy="385" rx="8" ry="4" fill="#6a87b6"/><ellipse cx="795" cy="385" rx="5" ry="8" fill="#6a87b6"/><ellipse cx="738" cy="402" rx="6" ry="4" fill="#6a87b6"/><ellipse cx="768" cy="415" rx="6" ry="5" fill="#6a87b6"/><ellipse cx="745" cy="420" rx="3" ry="3" fill="#6a87b6"/><ellipse cx="830" cy="400" rx="3" ry="3" fill="#6a87b6"/><ellipse cx="838" cy="430" rx="5" ry="7" fill="#6a87b6"/><ellipse cx="860" cy="465" rx="5" ry="5" fill="#6a87b6"/><ellipse cx="812" cy="468" rx="8" ry="5" fill="#6a87b6"/><ellipse cx="855" cy="418" rx="3" ry="3" fill="#6a87b6"/><ellipse cx="640" cy="475" rx="10" ry="4" fill="#6a87b6"/><ellipse cx="625" cy="470" rx="4" ry="3" fill="#6a87b6"/><ellipse cx="775" cy="478" rx="3" ry="3" fill="#6a87b6"/><ellipse cx="850" cy="492" rx="4" ry="5" fill="#6a87b6"/><ellipse cx="615" cy="362" rx="3" ry="5" fill="#6a87b6"/><ellipse cx="660" cy="352" rx="4" ry="3" fill="#6a87b6"/><ellipse cx="500" cy="400" rx="3" ry="3" fill="#6a87b6"/><ellipse cx="525" cy="410" rx="3" ry="3" fill="#6a87b6"/><ellipse cx="465" cy="418" rx="3" ry="5" fill="#6a87b6"/><ellipse cx="450" cy="400" rx="3" ry="4" fill="#6a87b6"/><ellipse cx="440" cy="312" rx="3" ry="3" fill="#6a87b6"/><ellipse cx="380" cy="352" rx="3" ry="3" fill="#6a87b6"/><ellipse cx="290" cy="370" rx="2" ry="2" fill="#6a87b6"/><ellipse cx="235" cy="362" rx="2" ry="3" fill="#6a87b6"/><ellipse cx="470" cy="322" rx="3" ry="3" fill="#6a87b6"/><ellipse cx="75" cy="478" rx="4" ry="6" fill="#6a87b6"/><ellipse cx="205" cy="478" rx="4" ry="7" fill="#6a87b6"/><ellipse cx="140" cy="472" rx="3" ry="3" fill="#6a87b6"/><ellipse cx="640" cy="440" rx="3" ry="3" fill="#6a87b6"/><ellipse cx="590" cy="440" rx="3" ry="3" fill="#6a87b6"/><ellipse cx="560" cy="455" rx="2" ry="2" fill="#6a87b6"/><ellipse cx="1026" cy="360" rx="3" ry="3" fill="#6a87b6"/><ellipse cx="1028" cy="405" rx="2" ry="3" fill="#6a87b6"/><ellipse cx="1015" cy="380" rx="2" ry="2" fill="#6a87b6"/><ellipse cx="1000" cy="440" rx="3" ry="3" fill="#6a87b6"/><ellipse cx="1010" cy="445" rx="2" ry="2" fill="#6a87b6"/><ellipse cx="1347" cy="270" rx="2" ry="5" fill="#6a87b6"/><ellipse cx="1432" cy="275" rx="3" ry="4" fill="#6a87b6"/><ellipse cx="340" cy="385" rx="3" ry="3" fill="#6a87b6"/><ellipse cx="366" cy="375" rx="4" ry="3" fill="#6a87b6"/><ellipse cx="372" cy="398" rx="5" ry="3" fill="#6a87b6"/><path d="M190 45L190 250M250 45L250 250M310 45L310 250M340 45L340 250M370 45L370 245M400 45L400 190M130 87L470 87M130 102L462 102M130 127L452 127M130 160L436 160M130 190L408 190M130 215L388 215M0 87L130 87M250 0L250 45M340 0L340 45M400 0L400 45M370 0L370 45M130 85L132 140L120 180L130 250M160 127L175 150L195 127M22 60L30 85L20 100L40 110M665 50L665 250M722 50L722 250M800 50L800 250M870 50L870 250M665 0L665 45M600 102L960 102M600 162L960 162M600 222L960 222M730 75L960 75M600 162L560 200L520 250M640 75L612 150L570 210L540 250M775 0L778 45M855 0L852 45M855 58L858 130L850 200L872 250M905 165L960 165M960 27L1085 27M960 100L1085 100M960 158L1085 158M960 217L1085 217M990 0L990 250M1020 30L1020 100L1030 160L1030 250M1072 0L1090 40L1092 100L1078 200L1060 250M1175 72L1345 72L1345 100M1177 100L1447 100M1172 72L1177 100M1300 0L1310 30L1300 70L1300 160L1290 250M1340 0L1375 45L1378 160L1370 250M1433 0L1433 250M1245 160L1447 160M1330 222L1447 222M1250 170L1255 250M1160 0L1168 60L1170 160L1190 250M0 265L40 268L60 290L85 292L125 285L130 250M130 250L130 325L95 330M80 388L82 440L105 470L105 500M125 390L150 440L150 500M170 385L170 500M200 440L200 500M265 410L265 500M0 412L46 410M0 463L46 460L100 458L200 440L260 425L310 420M46 440L140 432L200 428L225 425L265 420M335 394L365 378L400 365L440 345L480 338M310 430L345 405L380 398L430 395L480 397M342 395L342 500M395 365L395 500M428 340L428 500M310 338L480 338M310 455L480 452M165 480L310 478M230 298L250 285L300 262L330 252M480 280L960 280M480 338L945 338L960 345M605 428L790 430M605 338L605 500M665 250L665 500M547 445L547 500M735 250L735 300L722 330M805 280L800 338M903 340L903 500M480 445L520 440L547 445L605 440L650 430M480 470L560 462L640 455L665 452M742 432L745 460L735 500M665 465L700 455L740 460L800 470L830 500M600 338L560 300L540 250M960 338L1040 338M1088 250L1088 280M985 250L975 300L990 350L1000 420L1010 500M1010 250L1015 300L1030 350M1150 250L1150 290L1200 295M1252 250L1252 282L1336 282L1336 250M1336 282L1420 282M1400 250L1395 282M1052 442L1095 462L1140 500" fill="none" stroke="#aaaaab" stroke-width="1.8" stroke-linejoin="round"/><path d="M0 52C6.7 52.3 23.3 53 40 54C56.7 55 76.7 57.3 100 58C123.3 58.7 161.7 59.3 180 58C198.3 56.7 201.3 52.2 210 50C218.7 47.8 217 45.8 232 45C247 44.2 258.7 45.2 300 45C341.3 44.8 440.8 44.2 480 44C519.2 43.8 515 43.2 535 43.5C555 43.8 578.3 45.2 600 46C621.7 46.8 648.3 47.8 665 48C681.7 48.2 690.8 48 700 47C709.2 46 714.2 43 720 42C725.8 41 718.8 41 735 41C751.2 41 799.5 41 817 42C834.5 43 833.7 45.2 840 47C846.3 48.8 849.2 53 855 53C860.8 53 868.3 51.2 875 47C881.7 42.8 888 35.8 895 28C902 20.2 913.3 4.7 917 0M3 52C3 56.7 3.5 72 3 80C2.5 88 0.5 96.7 0 100M130 0C130 9.2 129.8 40.5 130 55C130.2 69.5 130.8 81.7 131 87M281 0C281 21.7 280.3 105 281 130C281.7 155 282.3 143 285 150C287.7 157 294 164.5 297 172C300 179.5 301.8 182 303 195C304.2 208 303.8 232.5 304 250C304.2 267.5 303 288.3 304 300C305 311.7 309 286.7 310 320C311 353.3 310 470 310 500M430 0C430 17.5 429 84.2 430 105C431 125.8 431.8 117.5 436 125C440.2 132.5 449.3 142.2 455 150C460.7 157.8 465.8 165.3 470 172C474.2 178.7 475.8 183.7 480 190C484.2 196.3 490.7 202.5 495 210C499.3 217.5 503.5 228.3 506 235C508.5 241.7 510 240.8 510 250C510 259.2 507.3 277.5 506 290C504.7 302.5 501.7 315 502 325C502.3 335 505.5 341.7 508 350C510.5 358.3 515.5 352.2 517 375C518.5 397.8 517 468.3 517 487M573 0C572.2 2.8 571.2 11.3 568 17C564.8 22.7 559.5 29.8 554 34C548.5 38.2 542.3 40.3 535 42C527.7 43.7 514.2 43.7 510 44M677 0C680.2 3.2 688.8 12.2 696 19C703.2 25.8 716 37.3 720 41M730 0C730 8.3 731.7 38.3 730 50C728.3 61.7 724 60.7 720 70C716 79.3 711.2 94.8 706 106C700.8 117.2 694.7 127.3 689 137C683.3 146.7 677.7 156.3 672 164C666.3 171.7 659 176.2 655 183C651 189.8 650 197.3 648 205C646 212.7 647.5 221.5 643 229C638.5 236.5 629 242.3 621 250C613 257.7 601.8 265.8 595 275C588.2 284.2 584.7 295.5 580 305C575.3 314.5 572 323.7 567 332C562 340.3 556.2 347.8 550 355C543.8 362.2 537.5 367.5 530 375C522.5 382.5 513.3 392.2 505 400C496.7 407.8 493.3 410.8 480 422C466.7 433.2 439.2 455.7 425 467C410.8 478.3 402.5 484.5 395 490C387.5 495.5 382.5 498.3 380 500M730 50C734.2 53.3 748.3 63.3 755 70C761.7 76.7 765 84.2 770 90C775 95.8 775 100.3 785 105C795 109.7 818.3 113 830 118C841.7 123 844.7 128 855 135C865.3 142 877.5 153.2 892 160C906.5 166.8 930.7 171.8 942 176C953.3 180.2 952.8 180.2 960 185C967.2 189.8 977.5 198.3 985 205C992.5 211.7 997.7 217.5 1005 225C1012.3 232.5 1025 245.8 1029 250M902 0C902 27.5 901.3 133.3 902 165C902.7 196.7 904.3 181.7 906 190C907.7 198.3 912.2 207.5 912 215C911.8 222.5 908.3 229.2 905 235C901.7 240.8 897.8 246.5 892 250C886.2 253.5 877.8 254 870 256C862.2 258 850.3 258 845 262C839.7 266 839.3 273.7 838 280C836.7 286.3 838.3 288.3 837 300C835.7 311.7 834.5 336.7 830 350C825.5 363.3 815.3 368.3 810 380C804.7 391.7 801 406.7 798 420C795 433.3 793.3 446.7 792 460C790.7 473.3 790.3 493.3 790 500M976 0C976.2 16.7 976.8 70.2 977 100C977.2 129.8 975.7 161.5 977 179C978.3 196.5 983.7 200.7 985 205M1029 250C1030 254.2 1033.7 266.5 1035 275C1036.3 283.5 1035.5 291.8 1037 301C1038.5 310.2 1042.2 321.5 1044 330C1045.8 338.5 1047.2 335.7 1048 352C1048.8 368.3 1048.3 403.3 1049 428C1049.7 452.7 1051.5 488 1052 500M1149 0C1150 5 1152.8 20.8 1155 30C1157.2 39.2 1158.3 45.8 1162 55C1165.7 64.2 1168.2 74.2 1177 85C1185.8 95.8 1200.2 105.8 1215 120C1229.8 134.2 1249 154.2 1266 170C1283 185.8 1300.8 201.7 1317 215C1333.2 228.3 1346 238.2 1363 250C1380 261.8 1405 275.7 1419 286C1433 296.3 1442.3 307.7 1447 312M0 367C5 368.7 20 374 30 377C40 380 48.3 383.2 60 385C71.7 386.8 80 388 100 388C120 388 162.5 384.3 180 385C197.5 385.7 197.5 389.5 205 392C212.5 394.5 216.3 397.7 225 400C233.7 402.3 247.5 404.8 257 406C266.5 407.2 273.2 408.5 282 407C290.8 405.5 301.2 399.2 310 397C318.8 394.8 330.8 394.5 335 394M46 388L46 500M1052 445C1053 446.2 1056.3 451.3 1058 452C1059.7 452.7 1061.3 449.5 1062 449" fill="none" stroke="#a98c3d" stroke-width="4.4" stroke-linejoin="round"/><path d="M0 52C6.7 52.3 23.3 53 40 54C56.7 55 76.7 57.3 100 58C123.3 58.7 161.7 59.3 180 58C198.3 56.7 201.3 52.2 210 50C218.7 47.8 217 45.8 232 45C247 44.2 258.7 45.2 300 45C341.3 44.8 440.8 44.2 480 44C519.2 43.8 515 43.2 535 43.5C555 43.8 578.3 45.2 600 46C621.7 46.8 648.3 47.8 665 48C681.7 48.2 690.8 48 700 47C709.2 46 714.2 43 720 42C725.8 41 718.8 41 735 41C751.2 41 799.5 41 817 42C834.5 43 833.7 45.2 840 47C846.3 48.8 849.2 53 855 53C860.8 53 868.3 51.2 875 47C881.7 42.8 888 35.8 895 28C902 20.2 913.3 4.7 917 0M3 52C3 56.7 3.5 72 3 80C2.5 88 0.5 96.7 0 100M130 0C130 9.2 129.8 40.5 130 55C130.2 69.5 130.8 81.7 131 87M281 0C281 21.7 280.3 105 281 130C281.7 155 282.3 143 285 150C287.7 157 294 164.5 297 172C300 179.5 301.8 182 303 195C304.2 208 303.8 232.5 304 250C304.2 267.5 303 288.3 304 300C305 311.7 309 286.7 310 320C311 353.3 310 470 310 500M430 0C430 17.5 429 84.2 430 105C431 125.8 431.8 117.5 436 125C440.2 132.5 449.3 142.2 455 150C460.7 157.8 465.8 165.3 470 172C474.2 178.7 475.8 183.7 480 190C484.2 196.3 490.7 202.5 495 210C499.3 217.5 503.5 228.3 506 235C508.5 241.7 510 240.8 510 250C510 259.2 507.3 277.5 506 290C504.7 302.5 501.7 315 502 325C502.3 335 505.5 341.7 508 350C510.5 358.3 515.5 352.2 517 375C518.5 397.8 517 468.3 517 487M573 0C572.2 2.8 571.2 11.3 568 17C564.8 22.7 559.5 29.8 554 34C548.5 38.2 542.3 40.3 535 42C527.7 43.7 514.2 43.7 510 44M677 0C680.2 3.2 688.8 12.2 696 19C703.2 25.8 716 37.3 720 41M730 0C730 8.3 731.7 38.3 730 50C728.3 61.7 724 60.7 720 70C716 79.3 711.2 94.8 706 106C700.8 117.2 694.7 127.3 689 137C683.3 146.7 677.7 156.3 672 164C666.3 171.7 659 176.2 655 183C651 189.8 650 197.3 648 205C646 212.7 647.5 221.5 643 229C638.5 236.5 629 242.3 621 250C613 257.7 601.8 265.8 595 275C588.2 284.2 584.7 295.5 580 305C575.3 314.5 572 323.7 567 332C562 340.3 556.2 347.8 550 355C543.8 362.2 537.5 367.5 530 375C522.5 382.5 513.3 392.2 505 400C496.7 407.8 493.3 410.8 480 422C466.7 433.2 439.2 455.7 425 467C410.8 478.3 402.5 484.5 395 490C387.5 495.5 382.5 498.3 380 500M730 50C734.2 53.3 748.3 63.3 755 70C761.7 76.7 765 84.2 770 90C775 95.8 775 100.3 785 105C795 109.7 818.3 113 830 118C841.7 123 844.7 128 855 135C865.3 142 877.5 153.2 892 160C906.5 166.8 930.7 171.8 942 176C953.3 180.2 952.8 180.2 960 185C967.2 189.8 977.5 198.3 985 205C992.5 211.7 997.7 217.5 1005 225C1012.3 232.5 1025 245.8 1029 250M902 0C902 27.5 901.3 133.3 902 165C902.7 196.7 904.3 181.7 906 190C907.7 198.3 912.2 207.5 912 215C911.8 222.5 908.3 229.2 905 235C901.7 240.8 897.8 246.5 892 250C886.2 253.5 877.8 254 870 256C862.2 258 850.3 258 845 262C839.7 266 839.3 273.7 838 280C836.7 286.3 838.3 288.3 837 300C835.7 311.7 834.5 336.7 830 350C825.5 363.3 815.3 368.3 810 380C804.7 391.7 801 406.7 798 420C795 433.3 793.3 446.7 792 460C790.7 473.3 790.3 493.3 790 500M976 0C976.2 16.7 976.8 70.2 977 100C977.2 129.8 975.7 161.5 977 179C978.3 196.5 983.7 200.7 985 205M1029 250C1030 254.2 1033.7 266.5 1035 275C1036.3 283.5 1035.5 291.8 1037 301C1038.5 310.2 1042.2 321.5 1044 330C1045.8 338.5 1047.2 335.7 1048 352C1048.8 368.3 1048.3 403.3 1049 428C1049.7 452.7 1051.5 488 1052 500M1149 0C1150 5 1152.8 20.8 1155 30C1157.2 39.2 1158.3 45.8 1162 55C1165.7 64.2 1168.2 74.2 1177 85C1185.8 95.8 1200.2 105.8 1215 120C1229.8 134.2 1249 154.2 1266 170C1283 185.8 1300.8 201.7 1317 215C1333.2 228.3 1346 238.2 1363 250C1380 261.8 1405 275.7 1419 286C1433 296.3 1442.3 307.7 1447 312M0 367C5 368.7 20 374 30 377C40 380 48.3 383.2 60 385C71.7 386.8 80 388 100 388C120 388 162.5 384.3 180 385C197.5 385.7 197.5 389.5 205 392C212.5 394.5 216.3 397.7 225 400C233.7 402.3 247.5 404.8 257 406C266.5 407.2 273.2 408.5 282 407C290.8 405.5 301.2 399.2 310 397C318.8 394.8 330.8 394.5 335 394M46 388L46 500M1052 445C1053 446.2 1056.3 451.3 1058 452C1059.7 452.7 1061.3 449.5 1062 449" fill="none" stroke="#c8a85a" stroke-width="2.8" stroke-linejoin="round"/><path transform="translate(289 158)" d="M-9 -6.5H9V-3.5H-9Z" fill="#b0443f"/><path transform="translate(289 158)" d="M-9 -3.5H9C9 2 5 6 0 8.5C-5 6 -9 2 -9 -3.5Z" fill="#3b5e9f"/><text x="289" y="162" font-size="8.5" font-weight="700" fill="#cfd6e6" text-anchor="middle">35W</text><rect x="411.5" y="154" width="11" height="11" fill="#b9b9b9" stroke="#3f3f3f" stroke-width="1.1"/><text x="417" y="162.8" font-size="9" font-weight="700" fill="#3a3a3a" text-anchor="middle">1</text><path transform="translate(508 45)" d="M-9 -6.5H9V-3.5H-9Z" fill="#b0443f"/><path transform="translate(508 45)" d="M-9 -3.5H9C9 2 5 6 0 8.5C-5 6 -9 2 -9 -3.5Z" fill="#3b5e9f"/><text x="508" y="49" font-size="8.5" font-weight="700" fill="#cfd6e6" text-anchor="middle">494</text><ellipse cx="654" cy="15" rx="8.5" ry="7" fill="#b9b9b9" stroke="#3f3f3f" stroke-width="1.1"/><text x="654" y="18.3" font-size="9" font-weight="700" fill="#3a3a3a" text-anchor="middle">13</text><ellipse cx="702" cy="30" rx="8.5" ry="7" fill="#b9b9b9" stroke="#3f3f3f" stroke-width="1.1"/><text x="702" y="33.3" font-size="9" font-weight="700" fill="#3a3a3a" text-anchor="middle">55</text><path transform="translate(857 53)" d="M-9 -6.5H9V-3.5H-9Z" fill="#b0443f"/><path transform="translate(857 53)" d="M-9 -3.5H9C9 2 5 6 0 8.5C-5 6 -9 2 -9 -3.5Z" fill="#3b5e9f"/><text x="857" y="57" font-size="8.5" font-weight="700" fill="#cfd6e6" text-anchor="middle">494</text><rect x="925.5" y="96.5" width="15" height="11" fill="#b9b9b9" stroke="#3f3f3f" stroke-width="1.1"/><text x="933" y="105.3" font-size="9" font-weight="700" fill="#3a3a3a" text-anchor="middle">26</text><ellipse cx="860" cy="139" rx="8.5" ry="7" fill="#b9b9b9" stroke="#3f3f3f" stroke-width="1.1"/><text x="860" y="142.3" font-size="9" font-weight="700" fill="#3a3a3a" text-anchor="middle">55</text><ellipse cx="814" cy="167" rx="8.5" ry="7" fill="#b9b9b9" stroke="#3f3f3f" stroke-width="1.1"/><text x="814" y="170.3" font-size="9" font-weight="700" fill="#3a3a3a" text-anchor="middle">149</text><ellipse cx="957" cy="181" rx="8.5" ry="7" fill="#b9b9b9" stroke="#3f3f3f" stroke-width="1.1"/><text x="957" y="184.3" font-size="9" font-weight="700" fill="#3a3a3a" text-anchor="middle">55</text><ellipse cx="499" cy="227" rx="8.5" ry="7" fill="#b9b9b9" stroke="#3f3f3f" stroke-width="1.1"/><text x="499" y="230.3" font-size="9" font-weight="700" fill="#3a3a3a" text-anchor="middle">77</text><path transform="translate(977 104)" d="M-8 -6.5L-5 -7.5L0 -6.5L5 -7.5L8 -6.5C7 -3 9 0 8 3C7 6 3 6 0 8C-3 6 -7 6 -8 3C-9 0 -7 -3 -8 -6.5Z" fill="#b9b9b9" stroke="#3f3f3f" stroke-width="1.1"/><text x="977" y="107.3" font-size="9" font-weight="700" fill="#3a3a3a" text-anchor="middle">52</text><path transform="translate(981 200)" d="M-8 -6.5L-5 -7.5L0 -6.5L5 -7.5L8 -6.5C7 -3 9 0 8 3C7 6 3 6 0 8C-3 6 -7 6 -8 3C-9 0 -7 -3 -8 -6.5Z" fill="#b9b9b9" stroke="#3f3f3f" stroke-width="1.1"/><text x="981" y="203.3" font-size="9" font-weight="700" fill="#3a3a3a" text-anchor="middle">52</text><path transform="translate(1221 128)" d="M-8 -6.5L-5 -7.5L0 -6.5L5 -7.5L8 -6.5C7 -3 9 0 8 3C7 6 3 6 0 8C-3 6 -7 6 -8 3C-9 0 -7 -3 -8 -6.5Z" fill="#b9b9b9" stroke="#3f3f3f" stroke-width="1.1"/><text x="1221" y="131.3" font-size="9" font-weight="700" fill="#3a3a3a" text-anchor="middle">10</text><rect x="1144.5" y="226.5" width="15" height="11" fill="#b9b9b9" stroke="#3f3f3f" stroke-width="1.1"/><text x="1152" y="235.3" font-size="9" font-weight="700" fill="#3a3a3a" text-anchor="middle">75</text><ellipse cx="107" cy="389" rx="8.5" ry="7" fill="#b9b9b9" stroke="#3f3f3f" stroke-width="1.1"/><text x="107" y="392.3" font-size="9" font-weight="700" fill="#3a3a3a" text-anchor="middle">13</text><ellipse cx="269" cy="411" rx="8.5" ry="7" fill="#b9b9b9" stroke="#3f3f3f" stroke-width="1.1"/><text x="269" y="414.3" font-size="9" font-weight="700" fill="#3a3a3a" text-anchor="middle">13</text><ellipse cx="45" cy="447" rx="8.5" ry="7" fill="#b9b9b9" stroke="#3f3f3f" stroke-width="1.1"/><text x="45" y="450.3" font-size="9" font-weight="700" fill="#3a3a3a" text-anchor="middle">13</text><path transform="translate(305 291)" d="M-9 -6.5H9V-3.5H-9Z" fill="#b0443f"/><path transform="translate(305 291)" d="M-9 -3.5H9C9 2 5 6 0 8.5C-5 6 -9 2 -9 -3.5Z" fill="#3b5e9f"/><text x="305" y="295" font-size="8.5" font-weight="700" fill="#cfd6e6" text-anchor="middle">35W</text><rect x="420.5" y="374.5" width="15" height="11" fill="#b9b9b9" stroke="#3f3f3f" stroke-width="1.1"/><text x="428" y="383.3" font-size="9" font-weight="700" fill="#3a3a3a" text-anchor="middle">11</text><path transform="translate(602 270)" d="M-9 -6.5H9V-3.5H-9Z" fill="#b0443f"/><path transform="translate(602 270)" d="M-9 -3.5H9C9 2 5 6 0 8.5C-5 6 -9 2 -9 -3.5Z" fill="#3b5e9f"/><text x="602" y="274" font-size="8.5" font-weight="700" fill="#cfd6e6" text-anchor="middle">35E</text><ellipse cx="484" cy="279.5" rx="8.5" ry="7" fill="#b9b9b9" stroke="#3f3f3f" stroke-width="1.1"/><text x="484" y="282.8" font-size="9" font-weight="700" fill="#3a3a3a" text-anchor="middle">13</text><ellipse cx="873" cy="258" rx="8.5" ry="7" fill="#b9b9b9" stroke="#3f3f3f" stroke-width="1.1"/><text x="873" y="261.3" font-size="9" font-weight="700" fill="#3a3a3a" text-anchor="middle">3</text><path transform="translate(1050 390)" d="M-8 -6.5L-5 -7.5L0 -6.5L5 -7.5L8 -6.5C7 -3 9 0 8 3C7 6 3 6 0 8C-3 6 -7 6 -8 3C-9 0 -7 -3 -8 -6.5Z" fill="#b9b9b9" stroke="#3f3f3f" stroke-width="1.1"/><text x="1050" y="393.3" font-size="9" font-weight="700" fill="#3a3a3a" text-anchor="middle">52</text><ellipse cx="1141" cy="497" rx="8.5" ry="7" fill="#b9b9b9" stroke="#3f3f3f" stroke-width="1.1"/><text x="1141" y="500.3" font-size="9" font-weight="700" fill="#3a3a3a" text-anchor="middle">55</text><rect x="1414.5" y="472.5" width="15" height="11" fill="#b9b9b9" stroke="#3f3f3f" stroke-width="1.1"/><text x="1422" y="481.3" font-size="9" font-weight="700" fill="#3a3a3a" text-anchor="middle">42</text><text x="0" y="43.5" font-size="13" fill="#2a5db0" textLength="6" lengthAdjust="spacingAndGlyphs" stroke="#c6c6c6" stroke-width="2.2" stroke-linejoin="round" stroke-opacity=".75" paint-order="stroke">e</text><text x="230" y="41" font-size="13" fill="#1f6a3a" text-anchor="end" textLength="66" lengthAdjust="spacingAndGlyphs" stroke="#c6c6c6" stroke-width="2.2" stroke-linejoin="round" stroke-opacity=".75" paint-order="stroke">Centennial</text><text x="164" y="54.5" font-size="13" fill="#1f6a3a" textLength="67" lengthAdjust="spacingAndGlyphs" stroke="#c6c6c6" stroke-width="2.2" stroke-linejoin="round" stroke-opacity=".75" paint-order="stroke">Lakes Park</text><text x="124.5" y="72.5" font-size="8.5" fill="#3a3a3a" text-anchor="middle" textLength="68" lengthAdjust="spacingAndGlyphs" font-weight="700" stroke="#c6c6c6" stroke-width="2" stroke-linejoin="round" stroke-opacity=".75" paint-order="stroke">NORMANDALE</text><text x="124.5" y="81.5" font-size="8.5" fill="#3a3a3a" text-anchor="middle" textLength="24" lengthAdjust="spacingAndGlyphs" font-weight="700" stroke="#c6c6c6" stroke-width="2" stroke-linejoin="round" stroke-opacity=".75" paint-order="stroke">LAKE</text><text x="0" y="112" font-size="13" fill="#1f6a3a" textLength="78" lengthAdjust="spacingAndGlyphs" stroke="#c6c6c6" stroke-width="2.2" stroke-linejoin="round" stroke-opacity=".75" paint-order="stroke">Hills Ski Area</text><text x="4" y="171" font-size="13" fill="#1f6a3a" textLength="138" lengthAdjust="spacingAndGlyphs" font-style="italic" stroke="#c6c6c6" stroke-width="2.2" stroke-linejoin="round" stroke-opacity=".75" paint-order="stroke">Hyland-Bush-Anderson</text><text x="11" y="185.5" font-size="13" fill="#1f6a3a" textLength="120" lengthAdjust="spacingAndGlyphs" font-style="italic" stroke="#c6c6c6" stroke-width="2.2" stroke-linejoin="round" stroke-opacity=".75" paint-order="stroke">Lakes Park Reserve</text><text x="164" y="193" font-size="13" fill="#4f5a63" textLength="75" lengthAdjust="spacingAndGlyphs" stroke="#c6c6c6" stroke-width="2.2" stroke-linejoin="round" stroke-opacity=".75" paint-order="stroke">Normandale</text><text x="164" y="207.5" font-size="13" fill="#4f5a63" textLength="120.5" lengthAdjust="spacingAndGlyphs" stroke="#c6c6c6" stroke-width="2.2" stroke-linejoin="round" stroke-opacity=".75" paint-order="stroke">Community College</text><text x="242" y="137" font-size="13.5" fill="#1d1d1d" textLength="79" lengthAdjust="spacingAndGlyphs" stroke="#c6c6c6" stroke-width="2.2" stroke-linejoin="round" stroke-opacity=".75" paint-order="stroke">Bloomington</text><text x="389" y="126" font-size="8.5" fill="#3a3a3a" text-anchor="middle" textLength="24" lengthAdjust="spacingAndGlyphs" font-weight="700" stroke="#c6c6c6" stroke-width="2" stroke-linejoin="round" stroke-opacity=".75" paint-order="stroke">EAST</text><text x="389" y="135" font-size="8.5" fill="#3a3a3a" text-anchor="middle" textLength="72.5" lengthAdjust="spacingAndGlyphs" font-weight="700" stroke="#c6c6c6" stroke-width="2" stroke-linejoin="round" stroke-opacity=".75" paint-order="stroke">BLOOMINGTON</text><text x="326" y="65.5" font-size="13" fill="#2a5db0" textLength="106" lengthAdjust="spacingAndGlyphs" stroke="#c6c6c6" stroke-width="2.2" stroke-linejoin="round" stroke-opacity=".75" paint-order="stroke">Mall of America®</text><text x="330" y="180.5" font-size="13" fill="#14757a" textLength="122.5" lengthAdjust="spacingAndGlyphs" stroke="#c6c6c6" stroke-width="2.2" stroke-linejoin="round" stroke-opacity=".75" paint-order="stroke">The Works Museum</text><text x="593.5" y="29" font-size="13" fill="#1f6a3a" text-anchor="middle" textLength="77" lengthAdjust="spacingAndGlyphs" stroke="#c6c6c6" stroke-width="2.2" stroke-linejoin="round" stroke-opacity=".75" paint-order="stroke">Fort Snelling</text><text x="593.5" y="43" font-size="13" fill="#1f6a3a" text-anchor="middle" textLength="64" lengthAdjust="spacingAndGlyphs" stroke="#c6c6c6" stroke-width="2.2" stroke-linejoin="round" stroke-opacity=".75" paint-order="stroke">State Park</text><text x="718" y="70" font-size="13" fill="#2a5db0" textLength="112" lengthAdjust="spacingAndGlyphs" stroke="#c6c6c6" stroke-width="2.2" stroke-linejoin="round" stroke-opacity=".75" paint-order="stroke">Costco Wholesale</text><text x="625" y="105" font-size="13" fill="#2a5db0" textLength="69" lengthAdjust="spacingAndGlyphs" stroke="#c6c6c6" stroke-width="2.2" stroke-linejoin="round" stroke-opacity=".75" paint-order="stroke">Sam's Club</text><text x="538" y="220" font-size="13" fill="#2a5db0" textLength="68" lengthAdjust="spacingAndGlyphs" stroke="#c6c6c6" stroke-width="2.2" stroke-linejoin="round" stroke-opacity=".75" paint-order="stroke">Twin Cities</text><text x="538" y="234.5" font-size="13" fill="#2a5db0" textLength="104" lengthAdjust="spacingAndGlyphs" stroke="#c6c6c6" stroke-width="2.2" stroke-linejoin="round" stroke-opacity=".75" paint-order="stroke">Premium Outlets</text><text x="846" y="20.5" font-size="13.5" fill="#1d1d1d" textLength="80" lengthAdjust="spacingAndGlyphs" stroke="#c6c6c6" stroke-width="2.2" stroke-linejoin="round" stroke-opacity=".75" paint-order="stroke">Sunfish Lake</text><text x="836" y="43" font-size="13" fill="#b0285a" textLength="115" lengthAdjust="spacingAndGlyphs" stroke="#c6c6c6" stroke-width="2.2" stroke-linejoin="round" stroke-opacity=".75" paint-order="stroke">Omni Viking Lakes</text><text x="833" y="104.5" font-size="8.5" fill="#3a3a3a" textLength="84" lengthAdjust="spacingAndGlyphs" font-weight="700" stroke="#c6c6c6" stroke-width="2" stroke-linejoin="round" stroke-opacity=".75" paint-order="stroke">SETTLER'S RIDGE</text><text x="1151.5" y="30" font-size="13.5" fill="#1d1d1d" text-anchor="middle" textLength="52" lengthAdjust="spacingAndGlyphs" stroke="#c6c6c6" stroke-width="2.2" stroke-linejoin="round" stroke-opacity=".75" paint-order="stroke">Newport</text><text x="1026" y="100" font-size="13.5" fill="#1d1d1d" text-anchor="middle" textLength="71" lengthAdjust="spacingAndGlyphs" stroke="#c6c6c6" stroke-width="2.2" stroke-linejoin="round" stroke-opacity=".75" paint-order="stroke">Inver Grove</text><text x="1026" y="114" font-size="13.5" fill="#1d1d1d" text-anchor="middle" textLength="48" lengthAdjust="spacingAndGlyphs" stroke="#c6c6c6" stroke-width="2.2" stroke-linejoin="round" stroke-opacity=".75" paint-order="stroke">Heights</text><text x="1172" y="162" font-size="13.5" fill="#1d1d1d" text-anchor="middle" textLength="76" lengthAdjust="spacingAndGlyphs" stroke="#c6c6c6" stroke-width="2.2" stroke-linejoin="round" stroke-opacity=".75" paint-order="stroke">St Paul Park</text><text x="1315" y="191" font-size="13.5" fill="#1d1d1d" text-anchor="middle" textLength="89" lengthAdjust="spacingAndGlyphs" stroke="#c6c6c6" stroke-width="2.2" stroke-linejoin="round" stroke-opacity=".75" paint-order="stroke">Cottage Grove</text><text x="1286" y="165.5" font-size="13" fill="#2a5db0" textLength="132" lengthAdjust="spacingAndGlyphs" stroke="#c6c6c6" stroke-width="2.2" stroke-linejoin="round" stroke-opacity=".75" paint-order="stroke">Hy-Vee Grocery Store</text><text x="1299" y="237" font-size="13" fill="#2a5db0" textLength="54" lengthAdjust="spacingAndGlyphs" stroke="#c6c6c6" stroke-width="2.2" stroke-linejoin="round" stroke-opacity=".75" paint-order="stroke">Menards</text><text x="1125.5" y="115" font-size="9.5" fill="#274f9e" textLength="76" lengthAdjust="spacingAndGlyphs" transform="rotate(-86 1125.5 115)" stroke="#8aa0c4" stroke-width="1.2" stroke-linejoin="round" stroke-opacity=".75" paint-order="stroke">Mississippi River</text><text x="65.5" y="259" font-size="13" fill="#1f6a3a" text-anchor="middle" textLength="65" lengthAdjust="spacingAndGlyphs" stroke="#c6c6c6" stroke-width="2.2" stroke-linejoin="round" stroke-opacity=".75" paint-order="stroke">Dred Scott</text><text x="65.5" y="272.5" font-size="13" fill="#1f6a3a" text-anchor="middle" textLength="30" lengthAdjust="spacingAndGlyphs" stroke="#c6c6c6" stroke-width="2.2" stroke-linejoin="round" stroke-opacity=".75" paint-order="stroke">Field</text><text x="104.5" y="449" font-size="13.5" fill="#1d1d1d" text-anchor="middle" textLength="46" lengthAdjust="spacingAndGlyphs" stroke="#c6c6c6" stroke-width="2.2" stroke-linejoin="round" stroke-opacity=".75" paint-order="stroke">Savage</text><text x="341" y="437" font-size="13.5" fill="#1d1d1d" text-anchor="middle" textLength="60" lengthAdjust="spacingAndGlyphs" stroke="#c6c6c6" stroke-width="2.2" stroke-linejoin="round" stroke-opacity=".75" paint-order="stroke">Burnsville</text><text x="245" y="380" font-size="13" fill="#1f6a3a" textLength="71" lengthAdjust="spacingAndGlyphs" stroke="#c6c6c6" stroke-width="2.2" stroke-linejoin="round" stroke-opacity=".75" paint-order="stroke">Grand Slam</text><text x="13" y="377" font-size="8.5" fill="#4a3f2a" textLength="38" lengthAdjust="spacingAndGlyphs" font-style="italic" transform="rotate(14 13 377)" stroke="#c6c6c6" stroke-width="1.5" stroke-linejoin="round" stroke-opacity=".75" paint-order="stroke">Sioux Trl</text><text x="351" y="274" font-size="8.5" fill="#2f55a0" textLength="69" lengthAdjust="spacingAndGlyphs" transform="rotate(-13 351 274)" stroke="#c6c6c6" stroke-width="1.5" stroke-linejoin="round" stroke-opacity=".75" paint-order="stroke">Minnesota River</text><text x="449" y="329" font-size="13" fill="#2a5db0" textLength="76" lengthAdjust="spacingAndGlyphs" stroke="#c6c6c6" stroke-width="2.2" stroke-linejoin="round" stroke-opacity=".75" paint-order="stroke">Trader Joe's</text><text x="170" y="499" font-size="13" fill="#2a5db0" textLength="92" lengthAdjust="spacingAndGlyphs" stroke="#c6c6c6" stroke-width="2.2" stroke-linejoin="round" stroke-opacity=".75" paint-order="stroke">Costco Wholes</text><text x="55" y="503" font-size="13" fill="#2a5db0" textLength="42" lengthAdjust="spacingAndGlyphs" stroke="#c6c6c6" stroke-width="2.2" stroke-linejoin="round" stroke-opacity=".75" paint-order="stroke">Hy-Vee</text><text x="664.5" y="288" font-size="13.5" fill="#1d1d1d" text-anchor="middle" textLength="39" lengthAdjust="spacingAndGlyphs" stroke="#c6c6c6" stroke-width="2.2" stroke-linejoin="round" stroke-opacity=".75" paint-order="stroke">Eagan</text><text x="712" y="275" font-size="13" fill="#1f6a3a" textLength="97" lengthAdjust="spacingAndGlyphs" stroke="#c6c6c6" stroke-width="2.2" stroke-linejoin="round" stroke-opacity=".75" paint-order="stroke">Caponi Art Park</text><text x="940" y="287" font-size="13" fill="#1f6a3a" text-anchor="end" textLength="68" lengthAdjust="spacingAndGlyphs" stroke="#c6c6c6" stroke-width="2.2" stroke-linejoin="round" stroke-opacity=".75" paint-order="stroke">Rich Valley</text><text x="940" y="301.5" font-size="13" fill="#1f6a3a" text-anchor="end" textLength="105" lengthAdjust="spacingAndGlyphs" stroke="#c6c6c6" stroke-width="2.2" stroke-linejoin="round" stroke-opacity=".75" paint-order="stroke">Athletic Complex</text><text x="779" y="357" font-size="13" fill="#1f6a3a" text-anchor="middle" textLength="84" lengthAdjust="spacingAndGlyphs" stroke="#c6c6c6" stroke-width="2.2" stroke-linejoin="round" stroke-opacity=".75" paint-order="stroke">Lebanon Hills</text><text x="779" y="371.5" font-size="13" fill="#1f6a3a" text-anchor="middle" textLength="85" lengthAdjust="spacingAndGlyphs" stroke="#c6c6c6" stroke-width="2.2" stroke-linejoin="round" stroke-opacity=".75" paint-order="stroke">Regional Park</text><text x="480" y="427" font-size="13" fill="#1f6a3a" textLength="90" lengthAdjust="spacingAndGlyphs" stroke="#c6c6c6" stroke-width="2.2" stroke-linejoin="round" stroke-opacity=".75" paint-order="stroke">Minnesota Zoo</text><text x="896" y="438.5" font-size="13" fill="#4f5a63" textLength="126" lengthAdjust="spacingAndGlyphs" stroke="#c6c6c6" stroke-width="2.2" stroke-linejoin="round" stroke-opacity=".75" paint-order="stroke">Flint Hills Resources</text><text x="1257" y="303" font-size="13" fill="#1f6a3a" text-anchor="middle" textLength="139" lengthAdjust="spacingAndGlyphs" stroke="#c6c6c6" stroke-width="2.2" stroke-linejoin="round" stroke-opacity=".75" paint-order="stroke">Hazen P. Mooers Park</text><text x="1330" y="327" font-size="13" fill="#1f6a3a" textLength="144" lengthAdjust="spacingAndGlyphs" stroke="#c6c6c6" stroke-width="2.2" stroke-linejoin="round" stroke-opacity=".75" paint-order="stroke">River Oaks Golf Course</text><text x="1366" y="341" font-size="13" fill="#1f6a3a" textLength="105" lengthAdjust="spacingAndGlyphs" stroke="#c6c6c6" stroke-width="2.2" stroke-linejoin="round" stroke-opacity=".75" paint-order="stroke">and Event Center</text><text x="1226" y="343" font-size="12" fill="#2f55a0" textLength="72" lengthAdjust="spacingAndGlyphs" font-style="italic" transform="rotate(26 1226 343)" stroke="#8aa0c4" stroke-width="1.5" stroke-linejoin="round" stroke-opacity=".75" paint-order="stroke">Mooers Lake</text><text x="1079" y="352" font-size="8.5" fill="#2f55a0" textLength="70" lengthAdjust="spacingAndGlyphs" transform="rotate(-73 1079 352)" stroke="#8aa0c4" stroke-width="1.5" stroke-linejoin="round" stroke-opacity=".75" paint-order="stroke">Mississippi River</text><text x="1221" y="410" font-size="8.5" fill="#2f55a0" textLength="70" lengthAdjust="spacingAndGlyphs" transform="rotate(7 1221 410)" stroke="#8aa0c4" stroke-width="1.5" stroke-linejoin="round" stroke-opacity=".75" paint-order="stroke">Mississippi River</text><text x="1210" y="449" font-size="12" fill="#2f55a0" textLength="68" lengthAdjust="spacingAndGlyphs" font-style="italic" transform="rotate(16 1210 449)" stroke="#8aa0c4" stroke-width="1.5" stroke-linejoin="round" stroke-opacity=".75" paint-order="stroke">Spring Lake</text><text x="1101.5" y="474" font-size="13" fill="#4f5a63" text-anchor="end" textLength="82" lengthAdjust="spacingAndGlyphs" stroke="#c6c6c6" stroke-width="2.2" stroke-linejoin="round" stroke-opacity=".75" paint-order="stroke">ROSEMOUNT</text><text x="1101.5" y="487.5" font-size="13" fill="#4f5a63" text-anchor="end" textLength="62" lengthAdjust="spacingAndGlyphs" stroke="#c6c6c6" stroke-width="2.2" stroke-linejoin="round" stroke-opacity=".75" paint-order="stroke">LANDFILL</text><text x="1371" y="434" font-size="13" fill="#1f6a3a" textLength="72" lengthAdjust="spacingAndGlyphs" stroke="#c6c6c6" stroke-width="2.2" stroke-linejoin="round" stroke-opacity=".75" paint-order="stroke">Spring Lake</text><g transform="translate(32 1)"><path d="M0 17.5C-1.5 12 -9.5 7 -9.5 0A9.5 9.5 0 0 1 9.5 0C9.5 7 1.5 12 0 17.5Z" fill="#2a7a45" stroke="#c9c9c9" stroke-width=".8"/><path d="M0 -6L-3.5 -1.5H-2L-4.5 2.5H-.8V5H.8V2.5H4.5L2 -1.5H3.5Z" fill="#d9d9d9"/></g><g transform="translate(197.5 1.5)"><path d="M0 17.5C-1.5 12 -9.5 7 -9.5 0A9.5 9.5 0 0 1 9.5 0C9.5 7 1.5 12 0 17.5Z" fill="#2a7a45" stroke="#c9c9c9" stroke-width=".8"/><path d="M0 -6L-3.5 -1.5H-2L-4.5 2.5H-.8V5H.8V2.5H4.5L2 -1.5H3.5Z" fill="#d9d9d9"/></g><g transform="translate(92 102.5)"><path d="M0 17.5C-1.5 12 -9.5 7 -9.5 0A9.5 9.5 0 0 1 9.5 0C9.5 7 1.5 12 0 17.5Z" fill="#2a7a45" stroke="#c9c9c9" stroke-width=".8"/><circle r="3.2" fill="#d9d9d9"/></g><g transform="translate(185.5 160)"><path d="M0 17.5C-1.5 12 -9.5 7 -9.5 0A9.5 9.5 0 0 1 9.5 0C9.5 7 1.5 12 0 17.5Z" fill="#5c6a75" stroke="#c9c9c9" stroke-width=".8"/><path d="M0 -4.5L-6.5 -1.5L0 1.5L6.5 -1.5ZM-3.8 .8V3.2C-2 5 2 5 3.8 3.2V.8L0 2.8Z" fill="#d9d9d9"/></g><g transform="translate(445.5 57)"><path d="M0 17.5C-1.5 12 -9.5 7 -9.5 0A9.5 9.5 0 0 1 9.5 0C9.5 7 1.5 12 0 17.5Z" fill="#3b6fc4" stroke="#c9c9c9" stroke-width=".8"/><path d="M-5 -2.5H5V4.5H-5ZM-2.5 -2.5V-4A2.5 2.5 0 0 1 2.5 -4V-2.5H1.3V-4A1.3 1.3 0 0 0 -1.3 -4V-2.5Z" fill="#d9d9d9"/><path d="M-2 0A2 2 0 0 0 2 0" fill="none" stroke="#3b6fc4" stroke-width="1"/></g><g transform="translate(316 172)"><path d="M0 17.5C-1.5 12 -9.5 7 -9.5 0A9.5 9.5 0 0 1 9.5 0C9.5 7 1.5 12 0 17.5Z" fill="#1c8a90" stroke="#c9c9c9" stroke-width=".8"/><path d="M-5 -1.5L0 -5.5L5 -1.5V4.5H-5ZM-3 -.5V3H3V-.5L1.5 1L0 -.5L-1.5 1Z" fill="#d9d9d9" fill-rule="evenodd"/></g><g transform="translate(738 30.5)"><path d="M0 17.5C-1.5 12 -9.5 7 -9.5 0A9.5 9.5 0 0 1 9.5 0C9.5 7 1.5 12 0 17.5Z" fill="#3b6fc4" stroke="#c9c9c9" stroke-width=".8"/><path d="M-5 -2.5H5V4.5H-5ZM-2.5 -2.5V-4A2.5 2.5 0 0 1 2.5 -4V-2.5H1.3V-4A1.3 1.3 0 0 0 -1.3 -4V-2.5Z" fill="#d9d9d9"/><path d="M-2 0A2 2 0 0 0 2 0" fill="none" stroke="#3b6fc4" stroke-width="1"/></g><g transform="translate(707 96)"><path d="M0 17.5C-1.5 12 -9.5 7 -9.5 0A9.5 9.5 0 0 1 9.5 0C9.5 7 1.5 12 0 17.5Z" fill="#3b6fc4" stroke="#c9c9c9" stroke-width=".8"/><path d="M-5 -2.5H5V4.5H-5ZM-2.5 -2.5V-4A2.5 2.5 0 0 1 2.5 -4V-2.5H1.3V-4A1.3 1.3 0 0 0 -1.3 -4V-2.5Z" fill="#d9d9d9"/><path d="M-2 0A2 2 0 0 0 2 0" fill="none" stroke="#3b6fc4" stroke-width="1"/></g><g transform="translate(525 219)"><path d="M0 17.5C-1.5 12 -9.5 7 -9.5 0A9.5 9.5 0 0 1 9.5 0C9.5 7 1.5 12 0 17.5Z" fill="#3b6fc4" stroke="#c9c9c9" stroke-width=".8"/><path d="M-5 -2.5H5V4.5H-5ZM-2.5 -2.5V-4A2.5 2.5 0 0 1 2.5 -4V-2.5H1.3V-4A1.3 1.3 0 0 0 -1.3 -4V-2.5Z" fill="#d9d9d9"/><path d="M-2 0A2 2 0 0 0 2 0" fill="none" stroke="#3b6fc4" stroke-width="1"/></g><g transform="translate(821 32)"><path d="M0 17.5C-1.5 12 -9.5 7 -9.5 0A9.5 9.5 0 0 1 9.5 0C9.5 7 1.5 12 0 17.5Z" fill="#c2386a" stroke="#c9c9c9" stroke-width=".8"/><path d="M-5.5 -4V4H-4.3V2H4.3V4H5.5V-1A2 2 0 0 0 3.5 -3H-.5V0H-4.3V-4Z" fill="#d9d9d9"/><circle cx="-2.5" cy="-1.8" r="1.4" fill="#d9d9d9"/></g><g transform="translate(775 -12)"><path d="M0 17.5C-1.5 12 -9.5 7 -9.5 0A9.5 9.5 0 0 1 9.5 0C9.5 7 1.5 12 0 17.5Z" fill="#3b6fc4" stroke="#c9c9c9" stroke-width=".8"/><circle r="3.2" fill="#d9d9d9"/></g><g transform="translate(1273 151)"><path d="M0 17.5C-1.5 12 -9.5 7 -9.5 0A9.5 9.5 0 0 1 9.5 0C9.5 7 1.5 12 0 17.5Z" fill="#3b6fc4" stroke="#c9c9c9" stroke-width=".8"/><path d="M-6 -4.5H-4L-2.8 1.5H3.8L5.2 -3H-3.4" fill="none" stroke="#d9d9d9" stroke-width="1.5"/><path d="M-3.3 -2.8H5L3.8 1.5H-2.7Z" fill="#d9d9d9"/><circle cx="-2" cy="4" r="1.2" fill="#d9d9d9"/><circle cx="3" cy="4" r="1.2" fill="#d9d9d9"/></g><g transform="translate(1366 228)"><path d="M0 17.5C-1.5 12 -9.5 7 -9.5 0A9.5 9.5 0 0 1 9.5 0C9.5 7 1.5 12 0 17.5Z" fill="#3b6fc4" stroke="#c9c9c9" stroke-width=".8"/><path d="M-5 -2.5H5V4.5H-5ZM-2.5 -2.5V-4A2.5 2.5 0 0 1 2.5 -4V-2.5H1.3V-4A1.3 1.3 0 0 0 -1.3 -4V-2.5Z" fill="#d9d9d9"/><path d="M-2 0A2 2 0 0 0 2 0" fill="none" stroke="#3b6fc4" stroke-width="1"/></g><g transform="translate(20 258)"><path d="M0 17.5C-1.5 12 -9.5 7 -9.5 0A9.5 9.5 0 0 1 9.5 0C9.5 7 1.5 12 0 17.5Z" fill="#2a7a45" stroke="#c9c9c9" stroke-width=".8"/><path d="M0 -6L-3.5 -1.5H-2L-4.5 2.5H-.8V5H.8V2.5H4.5L2 -1.5H3.5Z" fill="#d9d9d9"/></g><g transform="translate(330 369.5)"><path d="M0 17.5C-1.5 12 -9.5 7 -9.5 0A9.5 9.5 0 0 1 9.5 0C9.5 7 1.5 12 0 17.5Z" fill="#2a7a45" stroke="#c9c9c9" stroke-width=".8"/><circle r="3.2" fill="#d9d9d9"/></g><g transform="translate(111 494)"><path d="M0 17.5C-1.5 12 -9.5 7 -9.5 0A9.5 9.5 0 0 1 9.5 0C9.5 7 1.5 12 0 17.5Z" fill="#3b6fc4" stroke="#c9c9c9" stroke-width=".8"/><path d="M-6 -4.5H-4L-2.8 1.5H3.8L5.2 -3H-3.4" fill="none" stroke="#d9d9d9" stroke-width="1.5"/><path d="M-3.3 -2.8H5L3.8 1.5H-2.7Z" fill="#d9d9d9"/><circle cx="-2" cy="4" r="1.2" fill="#d9d9d9"/><circle cx="3" cy="4" r="1.2" fill="#d9d9d9"/></g><g transform="translate(296 493)"><path d="M0 17.5C-1.5 12 -9.5 7 -9.5 0A9.5 9.5 0 0 1 9.5 0C9.5 7 1.5 12 0 17.5Z" fill="#3b6fc4" stroke="#c9c9c9" stroke-width=".8"/><path d="M-5 -2.5H5V4.5H-5ZM-2.5 -2.5V-4A2.5 2.5 0 0 1 2.5 -4V-2.5H1.3V-4A1.3 1.3 0 0 0 -1.3 -4V-2.5Z" fill="#d9d9d9"/><path d="M-2 0A2 2 0 0 0 2 0" fill="none" stroke="#3b6fc4" stroke-width="1"/></g><g transform="translate(699 265)"><path d="M0 17.5C-1.5 12 -9.5 7 -9.5 0A9.5 9.5 0 0 1 9.5 0C9.5 7 1.5 12 0 17.5Z" fill="#2a7a45" stroke="#c9c9c9" stroke-width=".8"/><path d="M0 -6L-3.5 -1.5H-2L-4.5 2.5H-.8V5H.8V2.5H4.5L2 -1.5H3.5Z" fill="#d9d9d9"/></g><g transform="translate(538 320)"><path d="M0 17.5C-1.5 12 -9.5 7 -9.5 0A9.5 9.5 0 0 1 9.5 0C9.5 7 1.5 12 0 17.5Z" fill="#3b6fc4" stroke="#c9c9c9" stroke-width=".8"/><path d="M-6 -4.5H-4L-2.8 1.5H3.8L5.2 -3H-3.4" fill="none" stroke="#d9d9d9" stroke-width="1.5"/><path d="M-3.3 -2.8H5L3.8 1.5H-2.7Z" fill="#d9d9d9"/><circle cx="-2" cy="4" r="1.2" fill="#d9d9d9"/><circle cx="3" cy="4" r="1.2" fill="#d9d9d9"/></g><g transform="translate(582.5 418)"><path d="M0 17.5C-1.5 12 -9.5 7 -9.5 0A9.5 9.5 0 0 1 9.5 0C9.5 7 1.5 12 0 17.5Z" fill="#2a7a45" stroke="#c9c9c9" stroke-width=".8"/><ellipse cx="0" cy="2.5" rx="3.5" ry="2.8" fill="#d9d9d9"/><circle cx="-4.3" cy="-.8" r="1.5" fill="#d9d9d9"/><circle cx="-1.6" cy="-3.3" r="1.5" fill="#d9d9d9"/><circle cx="1.6" cy="-3.3" r="1.5" fill="#d9d9d9"/><circle cx="4.3" cy="-.8" r="1.5" fill="#d9d9d9"/></g><g transform="translate(953 285)"><path d="M0 17.5C-1.5 12 -9.5 7 -9.5 0A9.5 9.5 0 0 1 9.5 0C9.5 7 1.5 12 0 17.5Z" fill="#2a7a45" stroke="#c9c9c9" stroke-width=".8"/><circle r="3.2" fill="#d9d9d9"/></g><g transform="translate(1211.5 317)"><path d="M0 17.5C-1.5 12 -9.5 7 -9.5 0A9.5 9.5 0 0 1 9.5 0C9.5 7 1.5 12 0 17.5Z" fill="#2a7a45" stroke="#c9c9c9" stroke-width=".8"/><path d="M0 -6L-3.5 -1.5H-2L-4.5 2.5H-.8V5H.8V2.5H4.5L2 -1.5H3.5Z" fill="#d9d9d9"/></g><g transform="translate(1036 428)"><path d="M0 17.5C-1.5 12 -9.5 7 -9.5 0A9.5 9.5 0 0 1 9.5 0C9.5 7 1.5 12 0 17.5Z" fill="#5c6a75" stroke="#c9c9c9" stroke-width=".8"/><circle r="3.2" fill="#d9d9d9"/></g><g transform="translate(1115.5 471.5)"><path d="M0 17.5C-1.5 12 -9.5 7 -9.5 0A9.5 9.5 0 0 1 9.5 0C9.5 7 1.5 12 0 17.5Z" fill="#5c6a75" stroke="#c9c9c9" stroke-width=".8"/><circle r="3.2" fill="#d9d9d9"/></g><g transform="translate(1358 424)"><path d="M0 17.5C-1.5 12 -9.5 7 -9.5 0A9.5 9.5 0 0 1 9.5 0C9.5 7 1.5 12 0 17.5Z" fill="#2a7a45" stroke="#c9c9c9" stroke-width=".8"/><path d="M0 -6L-3.5 -1.5H-2L-4.5 2.5H-.8V5H.8V2.5H4.5L2 -1.5H3.5Z" fill="#d9d9d9"/></g><rect x="1007" y="468" width="5" height="6" fill="#5a80c8"/><path transform="translate(320.8 88.8)" d="M0 0C-2.5 -8 -10.2 -13 -10.2 -20.5A10.2 10.2 0 0 1 10.2 -20.5C10.2 -13 2.5 -8 0 0Z" fill="#4cc14b" stroke="#3f9e40" stroke-width="1"/><path transform="translate(186.8 247.5)" d="M0 0C-2.5 -8 -10.2 -13 -10.2 -20.5A10.2 10.2 0 0 1 10.2 -20.5C10.2 -13 2.5 -8 0 0Z" fill="#4cc14b" stroke="#3f9e40" stroke-width="1"/><path transform="translate(682.5 167)" d="M0 0C-2.5 -8 -10.2 -13 -10.2 -20.5A10.2 10.2 0 0 1 10.2 -20.5C10.2 -13 2.5 -8 0 0Z" fill="#4cc14b" stroke="#3f9e40" stroke-width="1"/><path transform="translate(1030.7 153)" d="M0 0C-2.5 -8 -10.2 -13 -10.2 -20.5A10.2 10.2 0 0 1 10.2 -20.5C10.2 -13 2.5 -8 0 0Z" fill="#4cc14b" stroke="#3f9e40" stroke-width="1"/><path transform="translate(1354.8 223)" d="M0 0C-2.5 -8 -10.2 -13 -10.2 -20.5A10.2 10.2 0 0 1 10.2 -20.5C10.2 -13 2.5 -8 0 0Z" fill="#4cc14b" stroke="#3f9e40" stroke-width="1"/><path transform="translate(350 391)" d="M0 0C-2.5 -8 -10.2 -13 -10.2 -20.5A10.2 10.2 0 0 1 10.2 -20.5C10.2 -13 2.5 -8 0 0Z" fill="#4cc14b" stroke="#3f9e40" stroke-width="1"/><path transform="translate(275 513)" d="M0 0C-2.5 -8 -10.2 -13 -10.2 -20.5A10.2 10.2 0 0 1 10.2 -20.5C10.2 -13 2.5 -8 0 0Z" fill="#4cc14b" stroke="#3f9e40" stroke-width="1"/><path transform="translate(50 512)" d="M0 0C-2.5 -8 -10.2 -13 -10.2 -20.5A10.2 10.2 0 0 1 10.2 -20.5C10.2 -13 2.5 -8 0 0Z" fill="#4cc14b" stroke="#3f9e40" stroke-width="1"/><path transform="translate(558 317.5)" d="M0 0C-2.5 -8 -10.2 -13 -10.2 -20.5A10.2 10.2 0 0 1 10.2 -20.5C10.2 -13 2.5 -8 0 0Z" fill="#4cc14b" stroke="#3f9e40" stroke-width="1"/><path transform="translate(739 281)" d="M0 0C-2.5 -8 -10.2 -13 -10.2 -20.5A10.2 10.2 0 0 1 10.2 -20.5C10.2 -13 2.5 -8 0 0Z" fill="#4cc14b" stroke="#3f9e40" stroke-width="1"/><path transform="translate(779 304)" d="M0 0C-2.5 -8 -10.2 -13 -10.2 -20.5A10.2 10.2 0 0 1 10.2 -20.5C10.2 -13 2.5 -8 0 0Z" fill="#4cc14b" stroke="#3f9e40" stroke-width="1"/><path transform="translate(197 -1)" d="M0 0C-2.5 -8 -10.2 -13 -10.2 -20.5A10.2 10.2 0 0 1 10.2 -20.5C10.2 -13 2.5 -8 0 0Z" fill="#4cc14b" stroke="#3f9e40" stroke-width="1"/></svg>
<div class="abs" style="left:459px;top:146px;width:192px;height:40px;background:#fff;border-radius:2px;box-shadow:0 1px 4px -1px rgba(0,0,0,.3)"></div><div class="abs" style="left:541px;top:146px;width:1px;height:40px;background:#e6e6e6"></div><div class="t" id="mc1" style="letter-spacing:0.0px;left:483px;top:146px;font-size:17.5px;line-height:40px;font-weight:700;color:#000">Map</div><div class="t" id="mc2" style="letter-spacing:0.2px;left:564.5px;top:146px;font-size:17.5px;line-height:40px;color:#565656">Satellite</div><div class="abs" style="left:1846px;top:146px;width:40px;height:40px;background:#fff;border-radius:2px;box-shadow:0 1px 4px -1px rgba(0,0,0,.3)"></div><svg class="abs" style="left:1857px;top:157px;width:18px;height:18px" viewBox="0 0 18 18"><path d="M0 0h6v2H2v4H0zM12 0h6v6h-2V2h-4zM0 12h2v4h4v2H0zM16 12h2v6h-6v-2h4z" fill="#666"/></svg><div class="abs" style="left:1846px;top:459px;width:40px;height:40px;background:#fff;border-radius:2px;box-shadow:0 1px 4px -1px rgba(0,0,0,.3)"></div><svg class="abs" style="left:1857px;top:463px;width:18px;height:34px" viewBox="0 0 18 34"><circle cx="9" cy="6.6" r="4.6" fill="#f9b21a"/><path d="M4.5 12.2C6 11.4 12 11.4 13.5 12.2C15.5 13.5 16.8 20 17 23L15 23.5L13.2 17.5L12.6 30.5H9.6L9 24L8.4 30.5H5.4L4.8 17.5L3 23.5L1 23C1.2 20 2.5 13.5 4.5 12.2Z" fill="#f9b21a"/><path d="M5.8 11.6L9 15.5L12.2 11.6" fill="none" stroke="#e8891c" stroke-width="1.3"/></svg><div class="abs" style="left:1846px;top:531px;width:40px;height:81px;background:#fff;border-radius:2px;box-shadow:0 1px 4px -1px rgba(0,0,0,.3)"></div><div class="abs" style="left:1851px;top:571px;width:30px;height:1px;background:#e6e6e6"></div><svg class="abs" style="left:1857px;top:541.5px;width:18px;height:18px" viewBox="0 0 18 18"><path d="M7.3 0h3.4v7.3H18v3.4h-7.3V18H7.3v-7.3H0V7.3h7.3z" fill="#666"/></svg><svg class="abs" style="left:1857px;top:582px;width:18px;height:18px" viewBox="0 0 18 18"><path d="M0 7.3h18v3.4H0z" fill="#666"/></svg><div class="abs" style="left:1637px;top:622px;width:259px;height:14px;background:rgba(215,215,215,.8)"></div><div class="abs" style="left:1733px;top:622px;width:1px;height:14px;background:#a0a0a0"></div><div class="abs" style="left:1856px;top:622px;width:1px;height:14px;background:#a0a0a0"></div><div class="t" id="at1" style="letter-spacing:-0.04px;left:1642.5px;top:622px;font-size:10px;line-height:14px;color:#222">Keyboard shortcuts</div><div class="t" id="at2" style="letter-spacing:-0.03px;left:1741px;top:622px;font-size:10px;line-height:14px;color:#222">Map data ©2023 Google</div><div class="t" id="at3" style="letter-spacing:0.17px;left:1862px;top:622px;font-size:10px;line-height:14px;color:#222">Terms</div><div class="t" style="left:458.5px;top:608.5px;font-size:18.5px;line-height:26px;letter-spacing:-.6px;-webkit-text-stroke:2.6px #e9e9e9;paint-order:stroke fill"><span style="color:#4a7fd8">G</span><span style="color:#d9483b">o</span><span style="color:#e6b323">o</span><span style="color:#4a7fd8">g</span><span style="color:#3f9d55">l</span><span style="color:#d9483b">e</span></div>
<div class="abs" style="left:449px;top:733px;width:212px;height:54px;background:#f5f5f5;border-radius:4px 4px 0 0;border-bottom:1px solid #8c8c8c"></div><div class="t" id="dd1" style="letter-spacing:0.5px;left:465px;top:749px;font-size:16px;line-height:22px;color:#212121">Last 8 hours</div><svg class="abs" style="left:635px;top:757.5px;width:10px;height:5px" viewBox="0 0 10 5"><path d="M0 0h10L5 5z" fill="#616161"/></svg><div class="abs" style="left:1684px;top:72px;width:212px;height:55.5px;background:#f5f5f5;border-radius:4px 4px 0 0;border-bottom:1px solid #8c8c8c"></div><div class="t" id="dd2" style="letter-spacing:0.39px;left:1700px;top:89px;font-size:16px;line-height:22px;color:#666">Filter</div><svg class="abs" style="left:1870.5px;top:98px;width:10px;height:5px" viewBox="0 0 10 5"><path d="M0 0h10L5 5z" fill="#616161"/></svg><svg class="abs" style="left:440px;top:806px;width:800px;height:274px" viewBox="0 0 800 274" font-family="Liberation Sans, sans-serif"><rect x="323.8" y="10" width="25" height="12" rx="2.5" fill="#f44336"/><text x="353.8" y="19.3" font-size="12" fill="#666" textLength="38" lengthAdjust="spacingAndGlyphs">Offline</text><rect x="397.5" y="10" width="25" height="12" rx="2.5" fill="#3a9fe9"/><text x="427.4" y="19.3" font-size="12" fill="#666" textLength="116.6" lengthAdjust="spacingAndGlyphs">Hardware Utilization</text><text x="31.6" y="269.3" font-size="12.5" fill="#666" text-anchor="end">0</text><rect x="39.4" y="229.1" width="734" height="1" fill="#e6e6e6"/><text x="31.6" y="232.7" font-size="12.5" fill="#666" text-anchor="end">10</text><rect x="39.4" y="192.5" width="734" height="1" fill="#e6e6e6"/><text x="31.6" y="196.1" font-size="12.5" fill="#666" text-anchor="end">20</text><rect x="39.4" y="155.9" width="734" height="1" fill="#e6e6e6"/><text x="31.6" y="159.5" font-size="12.5" fill="#666" text-anchor="end">30</text><rect x="39.4" y="119.3" width="734" height="1" fill="#e6e6e6"/><text x="31.6" y="122.9" font-size="12.5" fill="#666" text-anchor="end">40</text><rect x="39.4" y="82.7" width="734" height="1" fill="#e6e6e6"/><text x="31.6" y="86.3" font-size="12.5" fill="#666" text-anchor="end">50</text><rect x="39.4" y="46.1" width="734" height="1" fill="#e6e6e6"/><text x="31.6" y="49.7" font-size="12.5" fill="#666" text-anchor="end">60</text><rect x="48.7" y="163.7" width="7.8" height="102.5" fill="#3a9fe9"/><rect x="72.6" y="171" width="7.8" height="95.2" fill="#3a9fe9"/><rect x="96.4" y="163.7" width="7.8" height="102.5" fill="#3a9fe9"/><rect x="120.3" y="167.4" width="7.8" height="98.8" fill="#3a9fe9"/><rect x="110.7" y="262.5" width="7.8" height="3.7" fill="#f44336"/><rect x="144.2" y="171" width="7.8" height="95.2" fill="#3a9fe9"/><rect x="158.4" y="262.5" width="7.8" height="3.7" fill="#f44336"/><rect x="191.9" y="163.7" width="7.8" height="102.5" fill="#3a9fe9"/><rect x="215.8" y="171" width="7.8" height="95.2" fill="#3a9fe9"/><rect x="239.7" y="167.4" width="7.8" height="98.8" fill="#3a9fe9"/><rect x="263.5" y="167.4" width="7.8" height="98.8" fill="#3a9fe9"/><rect x="287.4" y="160.1" width="7.8" height="106.1" fill="#3a9fe9"/><rect x="311.3" y="174.7" width="7.8" height="91.5" fill="#3a9fe9"/><rect x="335.1" y="163.7" width="7.8" height="102.5" fill="#3a9fe9"/><rect x="359" y="171" width="7.8" height="95.2" fill="#3a9fe9"/><rect x="349.4" y="262.5" width="7.8" height="3.7" fill="#f44336"/><rect x="382.9" y="163.7" width="7.8" height="102.5" fill="#3a9fe9"/><rect x="406.8" y="167.4" width="7.8" height="98.8" fill="#3a9fe9"/><rect x="430.6" y="171" width="7.8" height="95.2" fill="#3a9fe9"/><rect x="454.5" y="167.4" width="7.8" height="98.8" fill="#3a9fe9"/><rect x="478.4" y="167.4" width="7.8" height="98.8" fill="#3a9fe9"/><rect x="502.2" y="163.7" width="7.8" height="102.5" fill="#3a9fe9"/><rect x="526.1" y="171" width="7.8" height="95.2" fill="#3a9fe9"/><rect x="550" y="167.4" width="7.8" height="98.8" fill="#3a9fe9"/><rect x="573.8" y="68.6" width="7.8" height="197.6" fill="#3a9fe9"/><rect x="621.6" y="167.4" width="7.8" height="98.8" fill="#3a9fe9"/><rect x="645.5" y="167.4" width="7.8" height="98.8" fill="#3a9fe9"/><rect x="669.3" y="68.6" width="7.8" height="197.6" fill="#3a9fe9"/><rect x="693.2" y="262.5" width="7.8" height="3.7" fill="#3a9fe9"/><rect x="717.1" y="171" width="7.8" height="95.2" fill="#3a9fe9"/><rect x="740.9" y="163.7" width="7.8" height="102.5" fill="#3a9fe9"/><rect x="764.8" y="72.2" width="7.8" height="194" fill="#3a9fe9"/><rect x="39.4" y="265.7" width="734" height="1" fill="#7a7a7a"/><rect x="119.1" y="266.2" width="1" height="8" fill="#7a7a7a"/><rect x="214.6" y="266.2" width="1" height="8" fill="#7a7a7a"/><rect x="310.1" y="266.2" width="1" height="8" fill="#7a7a7a"/><rect x="405.5" y="266.2" width="1" height="8" fill="#7a7a7a"/><rect x="501" y="266.2" width="1" height="8" fill="#7a7a7a"/><rect x="596.5" y="266.2" width="1" height="8" fill="#7a7a7a"/><rect x="692" y="266.2" width="1" height="8" fill="#7a7a7a"/></svg>

<svg class="abs" style="left:1346px;top:753.3px;width:14px;height:14px" viewBox="0 0 14 14"><rect width="14" height="14" rx="2.2" fill="#1d1d1d"/><circle cx="3.9" cy="10.1" r="1.5" fill="#fff"/><path d="M2.6 6.2A5.2 5.2 0 0 1 7.8 11.4M2.6 3A8.4 8.4 0 0 1 11 11.4" fill="none" stroke="#fff" stroke-width="1.7"/></svg>
<div class="t" id="bt0" style="letter-spacing:0.17px;left:1370px;top:749.3px;font-size:15.5px;line-height:22px;color:#262626">Revel Digital achieves ISO 27001 compliance certification</div>
<div class="t" id="bd0" style="letter-spacing:0.05px;left:1356.5px;top:770.8px;font-size:11.5px;line-height:16px;color:#9e9e9e">Apr 18, 2023 by Revel Digital</div>
<svg class="abs" style="left:1346px;top:799.8px;width:14px;height:14px" viewBox="0 0 14 14"><rect width="14" height="14" rx="2.2" fill="#1d1d1d"/><circle cx="3.9" cy="10.1" r="1.5" fill="#fff"/><path d="M2.6 6.2A5.2 5.2 0 0 1 7.8 11.4M2.6 3A8.4 8.4 0 0 1 11 11.4" fill="none" stroke="#fff" stroke-width="1.7"/></svg>
<div class="t" id="bt1" style="letter-spacing:-0.16px;left:1370px;top:795.8px;font-size:15.5px;line-height:22px;color:#262626">The QR Code as a Device</div>
<div class="t" id="bd1" style="letter-spacing:0.03px;left:1356.5px;top:817.3px;font-size:11.5px;line-height:16px;color:#9e9e9e">Feb 27, 2023 by Revel Digital</div>
<svg class="abs" style="left:1346px;top:846.4px;width:14px;height:14px" viewBox="0 0 14 14"><rect width="14" height="14" rx="2.2" fill="#1d1d1d"/><circle cx="3.9" cy="10.1" r="1.5" fill="#fff"/><path d="M2.6 6.2A5.2 5.2 0 0 1 7.8 11.4M2.6 3A8.4 8.4 0 0 1 11 11.4" fill="none" stroke="#fff" stroke-width="1.7"/></svg>
<div class="t" id="bt2" style="letter-spacing:0.08px;left:1370px;top:842.4px;font-size:15.5px;line-height:22px;color:#262626">New App in Canva</div>
<div class="t" id="bd2" style="letter-spacing:0.17px;left:1356.5px;top:863.9px;font-size:11.5px;line-height:16px;color:#9e9e9e">Nov 12, 2022 by Anonymous</div>
<svg class="abs" style="left:1346px;top:892.9px;width:14px;height:14px" viewBox="0 0 14 14"><rect width="14" height="14" rx="2.2" fill="#1d1d1d"/><circle cx="3.9" cy="10.1" r="1.5" fill="#fff"/><path d="M2.6 6.2A5.2 5.2 0 0 1 7.8 11.4M2.6 3A8.4 8.4 0 0 1 11 11.4" fill="none" stroke="#fff" stroke-width="1.7"/></svg>
<div class="t" id="bt3" style="letter-spacing:0.07px;left:1370px;top:888.9px;font-size:15.5px;line-height:22px;color:#262626">W-13: Where Innovation is Built</div>
<div class="t" id="bd3" style="letter-spacing:0.18px;left:1356.5px;top:910.4px;font-size:11.5px;line-height:16px;color:#9e9e9e">May 18, 2023 by Anonymous</div>
<svg class="abs" style="left:1346px;top:939.5px;width:14px;height:14px" viewBox="0 0 14 14"><rect width="14" height="14" rx="2.2" fill="#1d1d1d"/><circle cx="3.9" cy="10.1" r="1.5" fill="#fff"/><path d="M2.6 6.2A5.2 5.2 0 0 1 7.8 11.4M2.6 3A8.4 8.4 0 0 1 11 11.4" fill="none" stroke="#fff" stroke-width="1.7"/></svg>
<div class="t" id="bt4" style="letter-spacing:0.16px;left:1370px;top:935.5px;font-size:15.5px;line-height:22px;color:#262626">Scheduled Maintenance and IP change on May 30th</div>
<div class="t" id="bd4" style="letter-spacing:0.06px;left:1356.5px;top:957px;font-size:11.5px;line-height:16px;color:#9e9e9e">May 25, 2022 by Revel Digital</div>

<div class="abs" style="left:1916px;top:64px;width:4px;height:904.5px;background:#bdbdbd"></div>
</body>
</html>
